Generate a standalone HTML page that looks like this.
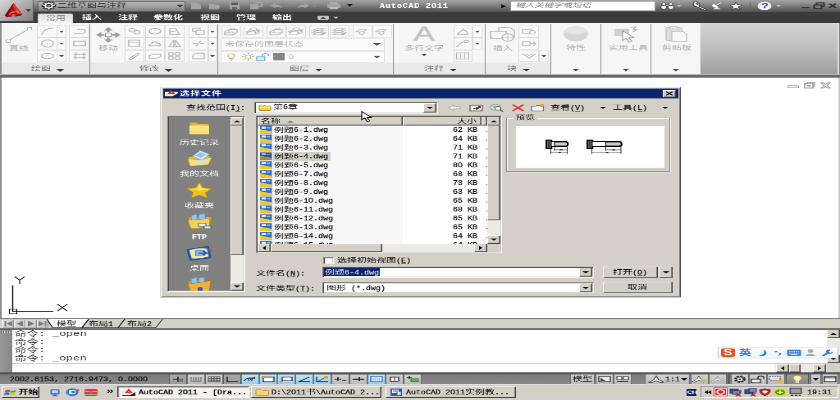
<!DOCTYPE html>
<html lang="zh-CN"><head><meta charset="utf-8"><title>AutoCAD 2011 - 选择文件</title>
<style>
html,body{margin:0;padding:0;background:#fff;}
body{width:840px;height:400px;overflow:hidden;position:relative;font-family:"Liberation Sans",sans-serif;}
#scr{position:absolute;left:0;top:0;width:1024px;height:768px;transform-origin:0 0;transform:scale(0.8203125,0.5208333);background:#fff;overflow:hidden;will-change:transform;}
#scr div,#scr svg,#scr span{position:absolute;box-sizing:border-box;}
#scr svg{overflow:visible;}
.lt{font-family:"Liberation Mono",monospace;white-space:pre;transform-origin:0 0;-webkit-text-stroke:.28px currentColor;}
.z{font-family:"Liberation Sans",sans-serif;}
.sans{font-family:"Liberation Sans",sans-serif;}
.cj{font-family:"Liberation Sans","Noto Sans CJK SC",sans-serif;white-space:nowrap;line-height:1;font-size:12px;}
.face{background:#d4d0c8;}
.raised{background:#d4d0c8;border:1px solid;border-color:#fff #404040 #404040 #fff;box-shadow:inset -1px -1px #808080,inset 1px 1px #d4d0c8;}
.raised2{background:#d4d0c8;border:1px solid;border-color:#d4d0c8 #404040 #404040 #d4d0c8;box-shadow:inset -1px -1px #808080,inset 1px 1px #fff;}
.sunken{background:#fff;border:1px solid;border-color:#808080 #fff #fff #808080;box-shadow:inset 1px 1px #404040,inset -1px -1px #d4d0c8;}
.thin-sunken{border:1px solid;border-color:#808080 #fff #fff #808080;}
.thin-raised{border:1px solid;border-color:#fff #808080 #808080 #fff;}
</style></head><body>
<div id="scr">
<div class="" style="left:0px;top:0px;width:1024px;height:23.5px;background:linear-gradient(#a2a2a2,#8c8c8c 30%,#666 70%,#4e4e4e);"></div>
<div class="" style="left:0px;top:23px;width:1024px;height:22px;background:#3b3b3b;"></div>
<div class="" style="left:0px;top:0px;width:41px;height:41px;background:linear-gradient(135deg,#d8d8d8,#a8a8a8 55%,#7c7c7c);border-right:1px solid #5a5a5a;border-bottom:1px solid #555;"></div>
<svg style="left:5px;top:4px;" width="23" height="31" viewBox="0 0 26 33"><path d="M13 1L25 25L22 29L4 32L1 28Z" fill="#c41212"/><path d="M13 1L1 28L4 32L9 22Z" fill="#7a0909"/><path d="M13 1L25 25L21 26L13 10Z" fill="#ea362c"/><path d="M8 21L19 17L21 23L6 27Z" fill="#f25a48"/><path d="M4 32L22 29L25 25L14 28Z" fill="#650707"/><path d="M10 23L17 21L18 24L9 26Z" fill="#a30e0e"/><path d="M9 31.300L13 25L17 30Z" fill="#8a8a8a"/></svg>
<svg style="left:31px;top:18px;" width="7" height="5" viewBox="0 0 7 5"><path d="M0 0H7L3.5 4.5Z" fill="#333"/></svg>
<div class="" style="left:46px;top:1.5px;width:180px;height:20px;background:linear-gradient(#b6b6b6,#a2a2a2 45%,#808080);border:1px solid #5e5e5e;border-top-color:#4a4a4a;border-radius:2px;"></div>
<svg style="left:50px;top:2px;" width="19" height="18" viewBox="0 0 19 18"><path d="M17.6 7.7L17.6 10.3L15.4 10.4L14.7 12.2L16.1 13.8L14.3 15.6L12.7 14.2L10.9 14.9L10.8 17.1L8.2 17.1L8.1 14.9L6.3 14.2L4.7 15.6L2.9 13.8L4.3 12.2L3.6 10.4L1.4 10.3L1.4 7.7L3.6 7.6L4.3 5.8L2.9 4.2L4.7 2.4L6.3 3.8L8.1 3.1L8.2 0.9L10.8 0.9L10.9 3.1L12.7 3.8L14.3 2.4L16.1 4.2L14.7 5.8L15.4 7.6Z" fill="#f4f4f4" stroke="#222" stroke-width="1.300"/><circle cx="9.500" cy="9" r="2.600" fill="#8e8e8e" stroke="#222" stroke-width="1.100"/></svg>
<span class="cj" style="left:70px;top:5px;color:#2e2e2e;">二维草图与注释</span>
<svg style="left:215px;top:9px;" width="9" height="5" viewBox="0 0 9 5"><path d="M0 0H9L4.5 5Z" fill="#333"/></svg>
<svg style="left:232px;top:4px;" width="14" height="15" viewBox="0 0 14 15"><path d="M1 1H9L13 5V14H1Z" fill="#a4a4a4"/></svg>
<svg style="left:254px;top:4px;" width="16" height="15" viewBox="0 0 16 15"><path d="M1 14V3H6L8 5H13V7H15L12 14Z" fill="#a4a4a4"/></svg>
<svg style="left:279px;top:4px;" width="14" height="15" viewBox="0 0 14 15"><path d="M1 1H13V14H1Z" fill="#a4a4a4"/><rect x="3" y="1" width="8" height="5" fill="#5a5a5a"/><rect x="4" y="9" width="6" height="5" fill="#666"/></svg>
<svg style="left:304px;top:4px;" width="16" height="15" viewBox="0 0 16 15"><path d="M1 3H11V14H1Z" fill="#a4a4a4"/><path d="M7 1H15V9H11" fill="none" stroke="#a4a4a4" stroke-width="2"/></svg>
<svg style="left:329px;top:5px;" width="16" height="12" viewBox="0 0 16 12"><path d="M1 6L7 1V4C12 4 15 7 15 11C13 8 11 8 7 8V11Z" fill="#a4a4a4"/></svg>
<svg style="left:348px;top:11px;" width="5" height="3" viewBox="0 0 5 3"><path d="M0 0H5L2.5 3Z" fill="#8a8a8a"/></svg>
<svg style="left:362px;top:5px;" width="16" height="12" viewBox="0 0 16 12"><path d="M15 6L9 1V4C4 4 1 7 1 11C3 8 5 8 9 8V11Z" fill="#a4a4a4"/></svg>
<svg style="left:381px;top:11px;" width="5" height="3" viewBox="0 0 5 3"><path d="M0 0H5L2.5 3Z" fill="#8a8a8a"/></svg>
<svg style="left:398px;top:3px;" width="18" height="16" viewBox="0 0 18 16"><rect x="4" y="1" width="10" height="5" fill="#aaa"/><rect x="1" y="5" width="16" height="7" rx="1" fill="#a2a2a2"/><rect x="4" y="10" width="10" height="5" fill="#bbb"/></svg>
<svg style="left:423px;top:8px;" width="7" height="5" viewBox="0 0 7 5"><path d="M0 0H7L3.5 5Z" fill="#1a1a1a"/></svg>
<span class="lt " style="left:463px;top:5.72px;font-size:12.84px;line-height:12px;color:#fff;transform:scaleX(0.7787);letter-spacing:1.284px;font-weight:bold;">AutoCAD 2</span><span class="lt z " style="left:526px;top:4.94px;font-size:12.48px;line-height:12px;color:#fff;transform:scaleX(0.8644);letter-spacing:1.157px;font-weight:bold;">0</span><span class="lt " style="left:533px;top:5.72px;font-size:12.84px;line-height:12px;color:#fff;transform:scaleX(0.7787);letter-spacing:1.284px;font-weight:bold;">11</span>
<svg style="left:611px;top:8px;" width="6" height="8" viewBox="0 0 6 8"><path d="M0 0L6 4L0 8Z" fill="#111"/></svg>
<div class="" style="left:622px;top:1.5px;width:177px;height:19.5px;background:#fff;border:1px solid #999;"></div>
<div style="left:629px;top:5px;width:100px;height:12px;transform:skewX(-14deg);"><span class="cj" style="left:0px;top:0px;font-size:11.5px;color:#808080;">键入关键字或短语</span></div>
<svg style="left:805px;top:4px;" width="17" height="15" viewBox="0 0 17 15"><g stroke="#333" stroke-width="1"><rect x="2" y="1.500" width="4.500" height="8" rx="1.500" fill="#f4f4f4"/><rect x="10.500" y="1.500" width="4.500" height="8" rx="1.500" fill="#f4f4f4"/><rect x="6.500" y="5" width="4" height="3.500" fill="#ccc"/><circle cx="4.200" cy="10" r="3.700" fill="#f4f4f4"/><circle cx="12.800" cy="10" r="3.700" fill="#f4f4f4"/></g></svg>
<svg style="left:825px;top:10px;" width="6" height="4" viewBox="0 0 6 4"><path d="M0 0H6L3 4Z" fill="#b4b4b4"/></svg>
<svg style="left:842px;top:2px;" width="22" height="19" viewBox="1 0 17 17"><path d="M2.500 4C2 1 6 .5 7.500 2L5.500 4L7 6L9 4.500C10 6 9.500 8 8 8.500L16 14C17 15 15.500 16.500 14.500 15.500L6 9.500C4 10 2.500 8 2.500 4Z" fill="#f6f6f6" stroke="#2a2a2a" stroke-width=".9"/></svg>
<svg style="left:866px;top:4px;" width="16" height="15" viewBox="0 0 16 15"><path d="M2 6C2 10 6 12 10 10L4 3Z" fill="#f0f0f0"/><path d="M6 7L13 1" stroke="#f0f0f0" stroke-width="1.5"/><path d="M3 14H13L9 10H7Z" fill="#e8e8e8"/></svg>
<svg style="left:889px;top:3px;" width="16" height="16" viewBox="0 0 16 16"><path d="M8 1L10 6.2L15.5 6.5L11.2 10L12.6 15.3L8 12.3L3.4 15.3L4.8 10L0.5 6.5L6 6.2Z" fill="#f4f4f4" stroke="#333" stroke-width="1"/></svg>
<div class="" style="left:914px;top:4px;width:1px;height:15px;background:#6a6a6a;"></div>
<svg style="left:923px;top:3px;" width="18" height="17" viewBox="0 0 18 17"><ellipse cx="9" cy="8.5" rx="8.5" ry="8" fill="#f4f4f4"/></svg>
<span class="sans" style="left:928px;top:2px;font-size:15px;line-height:17px;font-weight:bold;color:#1c3fb0;">?</span>
<svg style="left:946px;top:10px;" width="6" height="4" viewBox="0 0 6 4"><path d="M0 0H6L3 4Z" fill="#b4b4b4"/></svg>
<div class="" style="left:977px;top:13px;width:10px;height:3px;background:#333;"></div>
<svg style="left:991px;top:4px;" width="14" height="14" viewBox="0 0 14 14"><rect x="4.5" y="1.5" width="9" height="7" fill="none" stroke="#333" stroke-width="2"/><rect x="1.5" y="5.5" width="9" height="7" fill="#7a7a7a" stroke="#333" stroke-width="2"/></svg>
<svg style="left:1010px;top:6px;" width="10" height="10" viewBox="0 0 10 10"><path d="M1 1L9 9M9 1L1 9" stroke="#2a2a2a" stroke-width="2.2"/></svg>
<div class="" style="left:46px;top:26px;width:43px;height:19px;background:linear-gradient(#dedede,#f4f4f4);border-radius:3px 3px 0 0;border:1px solid #cfcfcf;border-bottom:0;"></div>
<span class="cj" style="left:56px;top:29px;color:#76808c;">常用</span>
<span class="cj" style="left:100px;top:28px;color:#fff;font-weight:bold;">插入</span>
<span class="cj" style="left:144px;top:28px;color:#fff;font-weight:bold;">注释</span>
<span class="cj" style="left:187px;top:28px;color:#fff;font-weight:bold;">参数化</span>
<span class="cj" style="left:244px;top:28px;color:#fff;font-weight:bold;">视图</span>
<span class="cj" style="left:288px;top:28px;color:#fff;font-weight:bold;">管理</span>
<span class="cj" style="left:332px;top:28px;color:#fff;font-weight:bold;">输出</span>
<div class="" style="left:387px;top:30px;width:14px;height:8px;background:#c4c4c4;border-radius:2px;"></div>
<svg style="left:390px;top:31.5px;" width="8" height="5" viewBox="0 0 8 5"><path d="M0 5H8L4 0Z" fill="#444"/></svg>
<svg style="left:406px;top:32px;" width="7" height="4" viewBox="0 0 7 4"><path d="M0 0H7L3.5 4Z" fill="#ccc"/></svg>
<div class="" style="left:0px;top:44px;width:1024px;height:101px;background:#f6f6f6;"></div>
<div class="" style="left:0px;top:44px;width:2px;height:104px;background:#8a8a8a;"></div>
<div class="" style="left:2px;top:120px;width:108px;height:22px;background:#e9e9e9;"></div>
<div class="" style="left:110px;top:120px;width:156px;height:22px;background:#e9e9e9;"></div>
<div class="" style="left:266px;top:120px;width:214px;height:22px;background:#e9e9e9;"></div>
<div class="" style="left:480px;top:120px;width:112px;height:22px;background:#e9e9e9;"></div>
<div class="" style="left:592px;top:120px;width:80px;height:22px;background:#e9e9e9;"></div>
<div class="" style="left:853px;top:44px;width:171px;height:100px;background:linear-gradient(#d2d2d2,#bdbdbd 50%,#9c9c9c);border-left:1px solid #e8e8e8;border-top:1px solid #e0e0e0;"></div>
<div class="" style="left:1021px;top:44px;width:1.5px;height:100px;background:#e0e0e0;"></div>
<div class="" style="left:1022.5px;top:44px;width:1.5px;height:100px;background:#7a7a7a;"></div>
<div class="" style="left:109px;top:46px;width:1.4px;height:96px;background:#8c8c8c;"></div>
<div class="" style="left:265px;top:46px;width:1.4px;height:96px;background:#8c8c8c;"></div>
<div class="" style="left:479px;top:46px;width:1.4px;height:96px;background:#8c8c8c;"></div>
<div class="" style="left:591px;top:46px;width:1.4px;height:96px;background:#8c8c8c;"></div>
<div class="" style="left:671px;top:46px;width:1.4px;height:96px;background:#8c8c8c;"></div>
<div class="" style="left:732px;top:46px;width:1.4px;height:96px;background:#8c8c8c;"></div>
<div class="" style="left:793px;top:46px;width:1.4px;height:96px;background:#8c8c8c;"></div>
<div class="" style="left:0px;top:142px;width:1024px;height:3px;background:#b8b8b8;"></div>
<div class="" style="left:0px;top:144px;width:1024px;height:5px;background:#666;"></div>
<svg style="left:6px;top:51px;" width="34" height="32" viewBox="0 0 34 32"><path d="M4 27L29 5" stroke="#b2b2b2" stroke-width="1.5"/><rect x="1.5" y="25.500" width="5" height="5" fill="#fff" stroke="#b2b2b2"/><rect x="27.500" y="1.500" width="5" height="5" fill="#fff" stroke="#b2b2b2"/></svg>
<span class="cj" style="left:11px;top:87px;color:#a8a8a8;">直线</span>
<div class="" style="left:45px;top:49px;width:25px;height:23px;border:1px solid #dadada;background:#f9f9f9;"></div>
<div class="" style="left:69px;top:49px;width:12px;height:23px;border:1px solid #dadada;background:#f9f9f9;"></div>
<svg style="left:72px;top:59px;" width="6" height="4" viewBox="0 0 6 4"><path d="M0 0H6 L3 4Z" fill="#555"/></svg>
<div class="" style="left:45px;top:72px;width:25px;height:23px;border:1px solid #dadada;background:#f9f9f9;"></div>
<div class="" style="left:69px;top:72px;width:12px;height:23px;border:1px solid #dadada;background:#f9f9f9;"></div>
<svg style="left:72px;top:82px;" width="6" height="4" viewBox="0 0 6 4"><path d="M0 0H6 L3 4Z" fill="#555"/></svg>
<div class="" style="left:45px;top:96px;width:25px;height:23px;border:1px solid #dadada;background:#f9f9f9;"></div>
<div class="" style="left:69px;top:96px;width:12px;height:23px;border:1px solid #dadada;background:#f9f9f9;"></div>
<svg style="left:72px;top:106px;" width="6" height="4" viewBox="0 0 6 4"><path d="M0 0H6 L3 4Z" fill="#555"/></svg>
<svg style="left:49px;top:52px;" width="18" height="17" viewBox="0 0 18 17"><path d="M2 15C3 7 9 2 16 2" fill="none" stroke="#b2b2b2" stroke-width="1.5"/></svg>
<svg style="left:49px;top:75px;" width="18" height="17" viewBox="0 0 18 17"><circle cx="9" cy="8.5" r="7" fill="none" stroke="#b2b2b2" stroke-width="1.5"/><circle cx="9" cy="8.5" r="1" fill="#b2b2b2"/></svg>
<svg style="left:49px;top:99px;" width="18" height="17" viewBox="0 0 18 17"><ellipse cx="9" cy="8.5" rx="7.5" ry="5" fill="none" stroke="#b2b2b2" stroke-width="1.5"/></svg>
<div class="" style="left:84px;top:49px;width:25px;height:23px;border:1px solid #dadada;background:#f9f9f9;"></div>
<div class="" style="left:84px;top:72px;width:25px;height:23px;border:1px solid #dadada;background:#f9f9f9;"></div>
<div class="" style="left:84px;top:96px;width:25px;height:23px;border:1px solid #dadada;background:#f9f9f9;"></div>
<svg style="left:88px;top:53px;" width="18" height="15" viewBox="0 0 18 15"><path d="M2 11H12A4 4 0 0 0 12 3H6" fill="none" stroke="#b2b2b2" stroke-width="1.6"/></svg>
<svg style="left:88px;top:76px;" width="18" height="15" viewBox="0 0 18 15"><rect x="2" y="3" width="14" height="9" fill="none" stroke="#b2b2b2" stroke-width="1.6"/></svg>
<svg style="left:88px;top:100px;" width="18" height="15" viewBox="0 0 18 15"><path d="M4 1V14M14 1V14M1 4H17M1 11H17" stroke="#b2b2b2" stroke-width="1.4"/></svg>
<span class="cj" style="left:38px;top:126px;color:#6e6e6e;">绘图</span>
<svg style="left:69px;top:133px;" width="9" height="5" viewBox="0 0 9 5"><path d="M0 0H9 L4.5 5Z" fill="#333"/></svg>
<svg style="left:117px;top:52px;" width="30" height="30" viewBox="0 0 30 30"><rect x="11.500" y="11.500" width="7" height="7" fill="#fff" stroke="#8e8e8e" stroke-width="1.200"/><path d="M15 0L9.500 6.500H20.500ZM15 30L9.500 23.500H20.500ZM0 15L6.500 9.500V20.500ZM30 15L23.500 9.500V20.500Z" fill="#9c9c9c"/><path d="M15 6V10.500M15 19.500V24M6 15H10.500M19.500 15H24" stroke="#9c9c9c" stroke-width="3"/></svg>
<span class="cj" style="left:120px;top:87px;color:#a8a8a8;">移动</span>
<div class="" style="left:152px;top:49px;width:24px;height:23px;border:1px solid #dadada;background:#f9f9f9;"></div>
<div class="" style="left:176.5px;top:49px;width:24px;height:23px;border:1px solid #dadada;background:#f9f9f9;"></div>
<div class="" style="left:201px;top:49px;width:24px;height:23px;border:1px solid #dadada;background:#f9f9f9;"></div>
<div class="" style="left:230px;top:49px;width:24px;height:23px;border:1px solid #dadada;background:#f9f9f9;"></div>
<div class="" style="left:254px;top:49px;width:11px;height:23px;border:1px solid #dadada;background:#f9f9f9;"></div>
<svg style="left:256px;top:59px;" width="6" height="4" viewBox="0 0 6 4"><path d="M0 0H6 L3 4Z" fill="#555"/></svg>
<div class="" style="left:152px;top:72px;width:24px;height:23px;border:1px solid #dadada;background:#f9f9f9;"></div>
<div class="" style="left:176.5px;top:72px;width:24px;height:23px;border:1px solid #dadada;background:#f9f9f9;"></div>
<div class="" style="left:201px;top:72px;width:24px;height:23px;border:1px solid #dadada;background:#f9f9f9;"></div>
<div class="" style="left:230px;top:72px;width:24px;height:23px;border:1px solid #dadada;background:#f9f9f9;"></div>
<div class="" style="left:254px;top:72px;width:11px;height:23px;border:1px solid #dadada;background:#f9f9f9;"></div>
<svg style="left:256px;top:82px;" width="6" height="4" viewBox="0 0 6 4"><path d="M0 0H6 L3 4Z" fill="#555"/></svg>
<div class="" style="left:152px;top:96px;width:24px;height:23px;border:1px solid #dadada;background:#f9f9f9;"></div>
<div class="" style="left:176.5px;top:96px;width:24px;height:23px;border:1px solid #dadada;background:#f9f9f9;"></div>
<div class="" style="left:201px;top:96px;width:24px;height:23px;border:1px solid #dadada;background:#f9f9f9;"></div>
<div class="" style="left:230px;top:96px;width:24px;height:23px;border:1px solid #dadada;background:#f9f9f9;"></div>
<div class="" style="left:254px;top:96px;width:11px;height:23px;border:1px solid #dadada;background:#f9f9f9;"></div>
<svg style="left:256px;top:106px;" width="6" height="4" viewBox="0 0 6 4"><path d="M0 0H6 L3 4Z" fill="#555"/></svg>
<svg style="left:155px;top:52px;" width="18" height="17" viewBox="0 0 18 17"><circle cx="6" cy="6" r="3.5" fill="none" stroke="#b2b2b2" stroke-width="1.4"/><circle cx="12" cy="10" r="3.5" fill="none" stroke="#b2b2b2" stroke-width="1.4"/></svg>
<svg style="left:179.5px;top:52px;" width="18" height="17" viewBox="0 0 18 17"><ellipse cx="9" cy="8" rx="7" ry="5.5" fill="none" stroke="#b2b2b2" stroke-width="1.5"/></svg>
<svg style="left:204px;top:52px;" width="18" height="17" viewBox="0 0 18 17"><path d="M3 14H15L10 3H3ZM4 9H10" fill="none" stroke="#b2b2b2" stroke-width="1.4"/></svg>
<svg style="left:155px;top:75px;" width="18" height="17" viewBox="0 0 18 17"><rect x="2" y="2" width="13" height="12" fill="none" stroke="#b2b2b2" stroke-width="1.4"/><path d="M2 6H15" stroke="#b2b2b2"/></svg>
<svg style="left:179.5px;top:75px;" width="18" height="17" viewBox="0 0 18 17"><path d="M2 13C2 9 5 9 5 9C5 5 11 4 12 8C16 8 16 13 14 13Z" fill="none" stroke="#b2b2b2" stroke-width="1.4"/></svg>
<svg style="left:204px;top:75px;" width="18" height="17" viewBox="0 0 18 17"><path d="M8 2V14H2ZM10 2V14H16Z" fill="none" stroke="#b2b2b2" stroke-width="1.3"/></svg>
<svg style="left:155px;top:99px;" width="18" height="17" viewBox="0 0 18 17"><path d="M2 14L13 3L15 5L4 16Z" fill="none" stroke="#b2b2b2" stroke-width="1.3"/></svg>
<svg style="left:179.5px;top:99px;" width="18" height="17" viewBox="0 0 18 17"><path d="M2 8L8 5H16V10L10 13H2Z" fill="none" stroke="#b2b2b2" stroke-width="1.3"/></svg>
<svg style="left:204px;top:99px;" width="18" height="17" viewBox="0 0 18 17"><path d="M2 2H7V7H2ZM10 2H15V7H10ZM2 10H7V15H2ZM10 10H15V15H10Z" fill="none" stroke="#b2b2b2" stroke-width="1.3"/></svg>
<svg style="left:233px;top:52px;" width="18" height="17" viewBox="0 0 18 17"><rect x="2" y="2" width="9" height="7" fill="none" stroke="#b2b2b2" stroke-width="1.4"/><rect x="6" y="6" width="10" height="8" fill="#fafafa" stroke="#b2b2b2" stroke-width="1.4"/></svg>
<svg style="left:233px;top:75px;" width="18" height="17" viewBox="0 0 18 17"><path d="M2 9H7M11 9H16M6 14L12 3" stroke="#b2b2b2" stroke-width="1.4"/></svg>
<svg style="left:233px;top:99px;" width="18" height="17" viewBox="0 0 18 17"><path d="M2 14V9C2 5 6 3 9 3H16V14Z" fill="none" stroke="#b2b2b2" stroke-width="1.4"/></svg>
<span class="cj" style="left:170px;top:126px;color:#6e6e6e;">修改</span>
<svg style="left:201px;top:133px;" width="9" height="5" viewBox="0 0 9 5"><path d="M0 0H9 L4.5 5Z" fill="#333"/></svg>
<div class="" style="left:270px;top:49px;width:23.5px;height:23px;border:1px solid #dadada;background:#f9f9f9;"></div>
<svg style="left:272px;top:52px;" width="20" height="17" viewBox="0 0 20 17"><path d="M2 9L7 5H17V11L12 15H2Z" fill="none" stroke="#b2b2b2" stroke-width="1.3"/><path d="M7 5V11H2M7 11H17" fill="none" stroke="#b2b2b2" stroke-width="1"/><path d="M9 5V2H14V5" fill="none" stroke="#b2b2b2" stroke-width="1.1"/></svg>
<div class="" style="left:297px;top:49px;width:23.5px;height:23px;border:1px solid #dadada;background:#f9f9f9;"></div>
<svg style="left:299px;top:52px;" width="20" height="17" viewBox="0 0 20 17"><path d="M2 8L7 5H17L12 8ZM2 11L7 8M12 8V11L17 8V5M2 8V14H12L17 11V8M12 11V14" fill="none" stroke="#b2b2b2" stroke-width="1.2"/><ellipse cx="10" cy="4" rx="4" ry="2.5" fill="#f9f9f9" stroke="#b2b2b2" stroke-width="1.1"/></svg>
<div class="" style="left:325px;top:49px;width:23.5px;height:23px;border:1px solid #dadada;background:#f9f9f9;"></div>
<svg style="left:327px;top:52px;" width="20" height="17" viewBox="0 0 20 17"><path d="M2 9L7 5H17V11L12 15H2Z" fill="none" stroke="#b2b2b2" stroke-width="1.3"/><path d="M7 5V11H2M7 11H17" fill="none" stroke="#b2b2b2" stroke-width="1"/><path d="M9 5V2H14V5" fill="none" stroke="#b2b2b2" stroke-width="1.1"/></svg>
<div class="" style="left:349px;top:49px;width:23.5px;height:23px;border:1px solid #dadada;background:#f9f9f9;"></div>
<svg style="left:351px;top:52px;" width="20" height="17" viewBox="0 0 20 17"><path d="M2 8L7 5H17L12 8ZM2 11L7 8M12 8V11L17 8V5M2 8V14H12L17 11V8M12 11V14" fill="none" stroke="#b2b2b2" stroke-width="1.2"/><ellipse cx="10" cy="4" rx="4" ry="2.5" fill="#f9f9f9" stroke="#b2b2b2" stroke-width="1.1"/></svg>
<div class="" style="left:377px;top:49px;width:23.5px;height:23px;border:1px solid #dadada;background:#f9f9f9;"></div>
<svg style="left:379px;top:52px;" width="20" height="17" viewBox="0 0 20 17"><path d="M2 6L7 3H16L11 6ZM2 10L7 7H16L11 10ZM2 14L7 11H16L11 14Z" fill="none" stroke="#b2b2b2" stroke-width="1.2"/><path d="M12 13L14 15L18 10" fill="none" stroke="#999" stroke-width="1.3"/></svg>
<div class="" style="left:402px;top:49px;width:23.5px;height:23px;border:1px solid #dadada;background:#f9f9f9;"></div>
<svg style="left:404px;top:52px;" width="20" height="17" viewBox="0 0 20 17"><path d="M2 6L7 3H16L11 6ZM2 10L7 7H16L11 10ZM2 14L7 11H16L11 14Z" fill="none" stroke="#b2b2b2" stroke-width="1.2"/><path d="M12 13L14 15L18 10" fill="none" stroke="#999" stroke-width="1.3"/></svg>
<div class="" style="left:430px;top:49px;width:23.5px;height:23px;border:1px solid #dadada;background:#f9f9f9;"></div>
<svg style="left:432px;top:52px;" width="20" height="17" viewBox="0 0 20 17"><path d="M2 9L6 5H15L11 9ZM6 9V12L9 15L12 12V9" fill="none" stroke="#b2b2b2" stroke-width="1.2"/></svg>
<div class="" style="left:454px;top:49px;width:23.5px;height:23px;border:1px solid #dadada;background:#f9f9f9;"></div>
<svg style="left:456px;top:52px;" width="20" height="17" viewBox="0 0 20 17"><path d="M2 9L6 5H15L11 9ZM6 9V12L9 15L12 12V9" fill="none" stroke="#b2b2b2" stroke-width="1.2"/></svg>
<div class="" style="left:269px;top:74px;width:200px;height:22.5px;border:1px solid #d8d8d8;background:#fbfbfb;"></div>
<span class="cj" style="left:274px;top:79px;color:#aeaeae;">未保存的图层状态</span>
<svg style="left:455px;top:83px;" width="9" height="5" viewBox="0 0 9 5"><path d="M0 0H9 L4.5 5Z" fill="#555"/></svg>
<div class="" style="left:269px;top:98px;width:200px;height:22.5px;border:1px solid #d8d8d8;background:#fbfbfb;"></div>
<svg style="left:277px;top:101px;" width="10" height="17" viewBox="0 0 12 17"><path d="M6 1C2.800 1 1 3.500 1 6C1 8.500 3.500 9.500 3.500 12H8.500C8.500 9.500 11 8.500 11 6C11 3.500 9.200 1 6 1Z" fill="#fffce6" stroke="#b0a580" stroke-width="1.200"/><path d="M4 14H8M4.500 16H7.500" stroke="#999" stroke-width="1.200"/></svg>
<svg style="left:294px;top:100px;" width="17" height="18" viewBox="0 0 18 18"><circle cx="9" cy="9" r="3.600" fill="#fffbd0" stroke="#b8a868"/><path d="M9 1V4M9 14V17M1 9H4M14 9H17M3.300 3.300L5.500 5.500M12.500 12.500L14.700 14.700M3.300 14.700L5.500 12.500M12.500 5.500L14.700 3.300" stroke="#777" stroke-width="1"/></svg>
<svg style="left:312px;top:101px;" width="18" height="16" viewBox="0 0 20 18"><rect x="1" y="9" width="11" height="8" fill="#d8eef8" stroke="#5aa0cc" stroke-width="1.300"/><path d="M9 9V5.500C9 1.500 17 1.500 17 5.500V7" fill="none" stroke="#5aa0cc" stroke-width="1.400"/></svg>
<div class="" style="left:333px;top:102px;width:14px;height:14px;background:#858585;"></div>
<span class="lt z " style="left:352px;top:102.94px;font-size:12.48px;line-height:12px;color:#c4c4c4;transform:scaleX(0.8644);">0</span>
<svg style="left:455px;top:107px;" width="9" height="5" viewBox="0 0 9 5"><path d="M0 0H9 L4.5 5Z" fill="#555"/></svg>
<span class="cj" style="left:353px;top:126px;color:#6e6e6e;">图层</span>
<svg style="left:384px;top:132px;" width="9" height="5" viewBox="0 0 9 5"><path d="M0 0H9 L4.5 5Z" fill="#333"/></svg>
<span class="sans" style="left:504px;top:46px;font-size:39px;line-height:38px;color:#c2c2c2;-webkit-text-stroke:.8px #c2c2c2;">A</span>
<span class="cj" style="left:493px;top:87px;color:#a8a8a8;">多行文字</span>
<svg style="left:514px;top:104px;" width="6" height="4" viewBox="0 0 6 4"><path d="M0 0H6 L3 4Z" fill="#555"/></svg>
<div class="" style="left:553px;top:49px;width:22.5px;height:23px;border:1px solid #dadada;background:#f9f9f9;"></div>
<div class="" style="left:575.5px;top:49px;width:12px;height:23px;border:1px solid #dadada;background:#f9f9f9;"></div>
<svg style="left:578.5px;top:59px;" width="6" height="4" viewBox="0 0 6 4"><path d="M0 0H6 L3 4Z" fill="#555"/></svg>
<div class="" style="left:553px;top:72px;width:22.5px;height:23px;border:1px solid #dadada;background:#f9f9f9;"></div>
<div class="" style="left:575.5px;top:72px;width:12px;height:23px;border:1px solid #dadada;background:#f9f9f9;"></div>
<svg style="left:578.5px;top:82px;" width="6" height="4" viewBox="0 0 6 4"><path d="M0 0H6 L3 4Z" fill="#555"/></svg>
<div class="" style="left:553px;top:96px;width:22.5px;height:23px;border:1px solid #dadada;background:#f9f9f9;"></div>
<svg style="left:555px;top:52px;" width="18" height="17" viewBox="0 0 18 17"><path d="M2 14H16M2 14L11 3M9 5C13 6 15 10 15 14" fill="none" stroke="#b2b2b2" stroke-width="1.4"/></svg>
<svg style="left:555px;top:75px;" width="18" height="17" viewBox="0 0 18 17"><path d="M2 15C5 10 6 6 11 5" fill="none" stroke="#b2b2b2" stroke-width="1.4"/><circle cx="13.500" cy="4.500" r="2.500" fill="none" stroke="#b2b2b2" stroke-width="1.2"/></svg>
<svg style="left:555px;top:99px;" width="18" height="17" viewBox="0 0 18 17"><rect x="1.500" y="2.500" width="15" height="12" fill="none" stroke="#b2b2b2" stroke-width="1.3"/><path d="M1 6.500H17M1 10.500H17M6.500 2V15M11.500 2V15" stroke="#b2b2b2" stroke-width="1.100"/></svg>
<span class="cj" style="left:517px;top:126px;color:#6e6e6e;">注释</span>
<svg style="left:548px;top:132px;" width="9" height="5" viewBox="0 0 9 5"><path d="M0 0H9 L4.5 5Z" fill="#333"/></svg>
<svg style="left:597px;top:51px;" width="32" height="30" viewBox="0 0 32 30"><rect x="1" y="9" width="19" height="14" fill="#f9f9f9" stroke="#b2b2b2" stroke-width="1.400"/><path d="M11 9V2H25L30 7V21H20" fill="none" stroke="#b2b2b2" stroke-width="1.400"/><circle cx="22" cy="21" r="7" fill="#f9f9f9" stroke="#b2b2b2" stroke-width="1.400"/><path d="M1 21H4M22 14V28M15 21H29" stroke="#b2b2b2" stroke-width=".9"/></svg>
<span class="cj" style="left:601px;top:87px;color:#a8a8a8;">插入</span>
<div class="" style="left:632px;top:49px;width:25px;height:23px;border:1px solid #dadada;background:#f9f9f9;"></div>
<div class="" style="left:632px;top:72px;width:25px;height:23px;border:1px solid #dadada;background:#f9f9f9;"></div>
<div class="" style="left:632px;top:96px;width:25px;height:23px;border:1px solid #dadada;background:#f9f9f9;"></div>
<div class="" style="left:657px;top:96px;width:11.5px;height:23px;border:1px solid #dadada;background:#f9f9f9;"></div>
<svg style="left:660px;top:106px;" width="6" height="4" viewBox="0 0 6 4"><path d="M0 0H6 L3 4Z" fill="#555"/></svg>
<svg style="left:635px;top:52px;" width="20" height="17" viewBox="0 0 20 17"><rect x="2" y="4" width="11" height="8" fill="none" stroke="#b2b2b2" stroke-width="1.300"/><circle cx="14" cy="10" r="3.500" fill="#fafafa" stroke="#b2b2b2" stroke-width="1.200"/></svg>
<svg style="left:635px;top:75px;" width="20" height="17" viewBox="0 0 20 17"><rect x="2" y="5" width="9" height="8" fill="none" stroke="#b2b2b2" stroke-width="1.300"/><path d="M11 9H18M15 5L18 9L15 13" fill="none" stroke="#b2b2b2" stroke-width="1.300"/></svg>
<svg style="left:635px;top:99px;" width="20" height="17" viewBox="0 0 20 17"><path d="M2 4L10 13L18 4M6 4C8 8 12 8 14 4" fill="none" stroke="#b2b2b2" stroke-width="1.400"/></svg>
<span class="cj" style="left:618px;top:126px;color:#6e6e6e;">块</span>
<svg style="left:637px;top:132px;" width="9" height="5" viewBox="0 0 9 5"><path d="M0 0H9 L4.5 5Z" fill="#333"/></svg>
<svg style="left:687px;top:50px;" width="30" height="30" viewBox="0 0 30 30"><ellipse cx="15" cy="15" rx="15" ry="14.500" fill="#d6d6d6"/><path d="M1.500 11C6 17 24 17 28.500 11C24 -2 6 -2 1.500 11Z" fill="#e6e6e6"/></svg>
<span class="cj" style="left:690px;top:86px;color:#a8a8a8;">特性</span>
<svg style="left:698px;top:132px;" width="8" height="5" viewBox="0 0 8 5"><path d="M0 0H8 L4 5Z" fill="#444"/></svg>
<svg style="left:746px;top:50px;" width="32" height="32" viewBox="0 0 32 32"><rect x="3" y="5" width="18" height="14" fill="#cfcfcf"/><path d="M13 9L13 28L17.500 23.500L21 31L24 29.500L20.500 22.500H27Z" fill="#fff" stroke="#9a9a9a" stroke-width="1.300"/><path d="M23 3L29 1L26 7L31 6L25 12" fill="none" stroke="#b2b2b2" stroke-width="1.300"/></svg>
<span class="cj" style="left:742px;top:86px;color:#a8a8a8;">实用工具</span>
<svg style="left:759px;top:132px;" width="8" height="5" viewBox="0 0 8 5"><path d="M0 0H8 L4 5Z" fill="#444"/></svg>
<svg style="left:810px;top:49px;" width="30" height="33" viewBox="0 0 30 33"><rect x="2" y="4" width="19" height="25" rx="2" fill="#dedede" stroke="#bcbcbc" stroke-width="1.300"/><rect x="7" y="1.500" width="9" height="5" rx="1" fill="#e8e8e8" stroke="#bcbcbc"/><path d="M9 11H22L27 16V31H9Z" fill="#f8f8f8" stroke="#bcbcbc" stroke-width="1.300"/></svg>
<span class="cj" style="left:807px;top:86px;color:#a8a8a8;">剪贴板</span>
<svg style="left:820px;top:132px;" width="8" height="5" viewBox="0 0 8 5"><path d="M0 0H8 L4 5Z" fill="#444"/></svg>
<div class="" style="left:0px;top:149px;width:1024px;height:463px;background:#fff;border-left:2px solid #8a8a8a;border-right:2px solid #c8c8c8;"></div>
<div class="" style="left:960px;top:164px;width:14px;height:5px;border:1.5px solid #9a9a9a;background:#eee;"></div>
<svg style="left:980px;top:157px;" width="14" height="14" viewBox="0 0 14 14"><path d="M3 3L5 1H13V9L11 11" fill="none" stroke="#9a9a9a" stroke-width="1.4"/><rect x="1" y="3" width="10" height="9" fill="#eee" stroke="#9a9a9a" stroke-width="1.6"/><rect x="4" y="6" width="4" height="3" fill="#9a9a9a"/></svg>
<svg style="left:1000px;top:158px;" width="13" height="12" viewBox="0 0 13 12"><path d="M1 1H4L6.5 4L9 1H12L8.5 6L12 11H9L6.5 8L4 11H1L4.5 6Z" fill="#eee" stroke="#9a9a9a" stroke-width="1.3"/></svg>
<svg style="left:8px;top:528px;" width="80" height="78" viewBox="0 0 80 78"><path d="M7.5 20V70H57" fill="none" stroke="#000" stroke-width="1.4"/><rect x="3.5" y="65.5" width="9" height="9" fill="none" stroke="#000" stroke-width="1.2"/><path d="M10 3L16 10L22 3M16 10V17" fill="none" stroke="#000" stroke-width="1.2"/><path d="M62 56L74 69M74 56L62 69" stroke="#000" stroke-width="1.2"/></svg>
<div class="" style="left:195px;top:167px;width:635px;height:404px;background:#d4d0c8;border:1px solid;border-color:#d4d0c8 #404040 #404040 #d4d0c8;box-shadow:inset 1px 1px #fff,inset -1px -1px #808080;"></div>
<div class="" style="left:199px;top:170px;width:628px;height:19px;background:#0a246a;"></div>
<svg style="left:201px;top:171px;" width="16" height="16" viewBox="0 0 16 16"><rect x="0" y="5" width="16" height="10" fill="#e8e8e8"/><path d="M0 15H16V8L9 14H0Z" fill="#222"/><path d="M8 1L13 10H10.5L8 5.5L5.5 10H3Z" fill="#e02020"/><path d="M4.5 8.5H11.5" stroke="#e02020" stroke-width="1.3"/></svg>
<span class="cj" style="left:219px;top:174px;color:#fff;font-weight:bold;letter-spacing:1px;">选择文件</span>
<div class="raised" style="left:808px;top:173px;width:16px;height:14px;"></div>
<svg style="left:812px;top:176px;" width="8" height="7" viewBox="0 0 8 7"><path d="M0 0L8 7M8 0L0 7" stroke="#000" stroke-width="1.7"/></svg>
<span class="cj" style="left:227px;top:201px;color:#000;">查找范围</span><span class="lt " style="left:275px;top:201.72px;font-size:12.84px;line-height:12px;color:#000;transform:scaleX(0.7787);">(I):</span>
<div class="" style="left:287px;top:213px;width:6px;height:1px;background:#000;"></div>
<div class="sunken" style="left:310px;top:196px;width:224px;height:22px;"></div>
<svg style="left:315px;top:200px;" width="16" height="14" viewBox="0 0 17.500 15"><path d="M1 3.500C1 2 2 1.500 3 1.500H7L9 3.500H15C16 3.500 16.500 4 16.500 5V12C16.500 13 16 13.500 15 13.500H2.500C1.500 13.500 1 13 1 12Z" fill="#f3cf52" stroke="#a8801e" stroke-width="1.100"/><path d="M1.500 6.500H16" stroke="#fff2b0" stroke-width="1.600"/><path d="M2 12.300H16" stroke="#d9a520" stroke-width="1.400"/></svg>
<span class="cj" style="left:333px;top:199.5px;color:#000;">第</span><span class="lt " style="left:345px;top:200.22px;font-size:12.84px;line-height:12px;color:#000;transform:scaleX(0.7787);">6</span><span class="cj" style="left:351px;top:199.5px;color:#000;">章</span>
<div class="raised" style="left:516px;top:198px;width:16px;height:18px;"></div>
<svg style="left:520px;top:205px;" width="8" height="4" viewBox="0 0 8 4"><path d="M0 0H8L4 4Z" fill="#000"/></svg>
<svg style="left:546px;top:200px;" width="16" height="14" viewBox="0 0 16 14"><path d="M1 7L7 1.5V5H15V9H7V12.5Z" fill="#f4f4f4" stroke="#a8a8a8" stroke-width="1.2"/></svg>
<svg style="left:572px;top:200px;" width="17" height="14" viewBox="0 0 17 14"><rect x="1" y="2" width="15" height="11" fill="#f2f2f2" stroke="#555" stroke-width="1.3"/><path d="M5 8H10M8.5 5.5L11 8L8.5 10.5" fill="none" stroke="#222" stroke-width="1.6"/><rect x="11" y="4" width="3" height="3" fill="#333"/></svg>
<svg style="left:597px;top:199px;" width="17" height="16" viewBox="0 0 17 16"><circle cx="7" cy="7" r="6" fill="#cfe6ee" stroke="#7aa0ae" stroke-width="1.2"/><path d="M3 5C5 3 8 3 10 5C9 8 6 9 4 8Z" fill="#9fc7a8"/><circle cx="10" cy="9" r="3.6" fill="#f4f4f4" stroke="#666" stroke-width="1.3"/><path d="M12.5 11.5L16 15" stroke="#555" stroke-width="2"/></svg>
<svg style="left:624px;top:200px;" width="15" height="14" viewBox="0 0 15 14"><path d="M1.5 1.5L13.5 12.5M13.5 1.5L1.5 12.5" stroke="#e23a3a" stroke-width="2.4" stroke-linecap="round"/></svg>
<svg style="left:647px;top:199px;" width="17" height="15" viewBox="0 0 17 15"><path d="M1 5H6L7.5 3.500H12V5H15.500V14H1Z" fill="#f6f6f6" stroke="#5a6a88" stroke-width="1.2"/><circle cx="13.500" cy="3" r="2.600" fill="#f59a23"/></svg>
<span class="cj" style="left:671px;top:201px;color:#000;">查看</span><span class="lt " style="left:695px;top:201.72px;font-size:12.84px;line-height:12px;color:#000;transform:scaleX(0.7787);">(V)</span>
<div class="" style="left:701px;top:213px;width:6px;height:1px;background:#000;"></div>
<svg style="left:731px;top:205px;" width="8" height="4" viewBox="0 0 8 4"><path d="M0 0H8L4 4Z" fill="#000"/></svg>
<span class="cj" style="left:747px;top:201px;color:#000;">工具</span><span class="lt " style="left:771px;top:201.72px;font-size:12.84px;line-height:12px;color:#000;transform:scaleX(0.7787);">(L)</span>
<div class="" style="left:777px;top:213px;width:6px;height:1px;background:#000;"></div>
<svg style="left:807px;top:205px;" width="8" height="4" viewBox="0 0 8 4"><path d="M0 0H8L4 4Z" fill="#000"/></svg>
<div class="sunken" style="left:204px;top:223px;width:95px;height:337px;background:#808080;"></div>
<div class="" style="left:206px;top:225px;width:75px;height:333px;background:#808080;"></div>
<div class="" style="left:281px;top:225px;width:16px;height:333px;background:#eceae4;"></div>
<div class="raised" style="left:281px;top:225px;width:16px;height:16px;"></div>
<svg style="left:285px;top:231px;" width="8" height="4" viewBox="0 0 8 4"><path d="M0 4H8L4 0Z" fill="#000"/></svg>
<div class="raised" style="left:281px;top:241px;width:16px;height:249px;"></div>
<div class="raised" style="left:281px;top:542px;width:16px;height:16px;"></div>
<svg style="left:285px;top:548px;" width="8" height="4" viewBox="0 0 8 4"><path d="M0 0H8L4 4Z" fill="#000"/></svg>
<div style="left:0;top:0;width:281px;height:558px;overflow:hidden;"><svg style="left:227px;top:228px;" width="32" height="32" viewBox="0 0 32 32"><path d="M4 9C4 7.5 5 7 6 7H12L14.5 9.5H26C27.5 9.5 28 10 28 11.5V28C28 29.5 27.5 30 26 30H6C4.5 30 4 29.5 4 28Z" fill="#e2b43a" stroke="#a8801e" stroke-width=".8"/><path d="M4 13.5C12 12.5 20 12.5 28 13.5V28C28 29.5 27.5 30 26 30H6C4.5 30 4 29.5 4 28Z" fill="#f9e07a"/><path d="M5 14.5C12 13.5 20 13.5 27 14.5" stroke="#fff4c0" stroke-width="1.6" fill="none"/></svg><span class="cj" style="left:219px;top:268px;color:#fff;">历史记录</span><svg style="left:227px;top:288.3px;" width="32" height="32" viewBox="0 0 32 32"><path d="M2 14L10 11L14 13L29 11V17L27 28L5 31Z" fill="#e4b53a" stroke="#a8801e" stroke-width=".8"/><path d="M8 12L17 1L28 8L19 19Z" fill="#d4ebfc" stroke="#7db0dc" stroke-width=".9"/><path d="M11 11L17 4L24 8.5L18 15Z" fill="#8cc3f0"/><path d="M2 17L17 19L31 14L27 28L5 31Z" fill="#f9e07a" stroke="#c29a2a" stroke-width=".8"/><path d="M13 20L24 17L22 25L12 26Z" fill="#bfe2f8" opacity=".85"/></svg><span class="cj" style="left:219px;top:328.3px;color:#fff;">我的文档</span><svg style="left:227px;top:348.6px;" width="32" height="32" viewBox="0 0 32 32"><path d="M16 1L20.5 11.5L31.5 13L23.5 20.5L26 31L16 25.5L6 31L8.5 20.5L0.5 13L11.5 11.5Z" fill="#f2c21e" stroke="#b8880f" stroke-width=".9"/><path d="M16 4L19 13L28 14L16 17Z" fill="#ffe98a"/><path d="M16 4L13 13L4 14L16 17Z" fill="#fbd64a"/></svg><span class="cj" style="left:225px;top:388.6px;color:#fff;">收藏夹</span><svg style="left:227px;top:408.9px;" width="32" height="32" viewBox="0 0 32 32"><path d="M2 9L10 6L31 8L28 29L6 30Z" fill="#dfae34" stroke="#9c761a" stroke-width=".8"/><path d="M6 5L13 2L14 22L7 24ZM15 3L23 1L24 20L16 22Z" fill="#8fc4ee" stroke="#4e86c4" stroke-width=".8"/><path d="M2 14L29 11L28 29L6 30Z" fill="#f3cf5c" stroke="#b38a22" stroke-width=".8"/><rect x="15" y="20" width="9" height="6" fill="#e4ecf8" stroke="#345" stroke-width=".8"/><rect x="22" y="25" width="8" height="5" fill="#e4ecf8" stroke="#345" stroke-width=".8"/><path d="M16 27H22" stroke="#345"/></svg><span class="lt " style="left:234px;top:449.62px;font-size:12.84px;line-height:12px;color:#fff;transform:scaleX(0.7787);font-weight:bold;">FTP</span><svg style="left:225px;top:470.2px;" width="36" height="31" viewBox="0 0 33 32"><path d="M1 9L28 3L31 26L5 31Z" fill="#1c62d2" stroke="#0c3a90" stroke-width=".9"/><path d="M4 11C10 7 21 6 26 8L28 23C20 27 10 28 7 27Z" fill="#f4e6a0"/><path d="M12 11H23V22H12Z" fill="#8abdee" stroke="#2a64b4" stroke-width=".9"/><path d="M15 16.5H25M21 12.5L26 16.5L21 20.5" fill="none" stroke="#1a54b0" stroke-width="2"/><circle cx="30.500" cy="12" r="2.2" fill="#e03a2a"/></svg><span class="cj" style="left:231px;top:509.2px;color:#fff;">桌面</span><svg style="left:227px;top:529.5px;" width="32" height="32" viewBox="0 0 32 32"><path d="M2 11L10 7L30 9L28 30L6 31Z" fill="#e2a52a" stroke="#9c6f16" stroke-width=".8"/><path d="M6 6L13 2L14 24L7 26ZM15 4L22 2L23 22L16 24Z" fill="#8fc4ee" stroke="#4e86c4" stroke-width=".8"/><path d="M2 16L30 9L28 30L6 31Z" fill="#f0b23a" stroke="#a8761a" stroke-width=".8"/><path d="M14 24C14 20 20 20 20 24V29H14Z" fill="#3a5a9a"/></svg></div>
<div class="sunken" style="left:312px;top:222px;width:300px;height:264px;"></div>
<div class="" style="left:314px;top:241px;width:177px;height:227px;background:#f7f7f7;"></div>
<div class="" style="left:314px;top:224px;width:177px;height:17px;background:#d4d0c8;border:1px solid;border-color:#fff #404040 #404040 #fff;box-shadow:inset -1px -1px #808080;"></div>
<div class="" style="left:491px;top:224px;width:96px;height:17px;background:#d4d0c8;border:1px solid;border-color:#fff #404040 #404040 #fff;box-shadow:inset -1px -1px #808080;"></div>
<div class="" style="left:587px;top:224px;width:7px;height:17px;background:#d4d0c8;border:1px solid;border-color:#fff #404040 #404040 #fff;box-shadow:inset -1px -1px #808080;"></div>
<span class="cj" style="left:318px;top:227px;color:#000;">名称</span>
<svg style="left:350px;top:231px;" width="8" height="5" viewBox="0 0 8 5"><path d="M0 5H8L4 0Z" fill="#8a8880"/></svg>
<span class="cj" style="left:557px;top:227px;color:#000;">大小</span>
<div style="left:0;top:0;width:594px;height:468px;overflow:hidden;"><svg style="left:316px;top:241px;" width="16" height="16" viewBox="0 0 16 16"><rect x="1" y=".5" width="14.500" height="15" fill="#2f6fc9"/><path d="M1 7.500L15.500 12V15.500H1Z" fill="#f6c81e"/><path d="M1 7.500L15.500 12" stroke="#fbe48a" stroke-width=".8" opacity=".7"/><rect x="3" y="2" width="5" height="4" fill="#e4eefa"/><rect x="9" y="3" width="4.500" height="2.500" fill="#8db4ea"/></svg><span class="cj" style="left:334px;top:243.5px;color:#000;">例题</span><span class="lt " style="left:358px;top:244.22px;font-size:12.84px;line-height:12px;color:#000;transform:scaleX(0.7787);">6-1.dwg</span><span class="lt " style="left:552px;top:244.22px;font-size:12.84px;line-height:12px;color:#000;transform:scaleX(0.7787);">62 KB</span><span class="lt " style="left:591px;top:244.22px;font-size:12.84px;line-height:12px;color:#000;transform:scaleX(0.7787);">.</span><svg style="left:316px;top:258px;" width="16" height="16" viewBox="0 0 16 16"><rect x="1" y=".5" width="14.500" height="15" fill="#2f6fc9"/><path d="M1 7.500L15.500 12V15.500H1Z" fill="#f6c81e"/><path d="M1 7.500L15.500 12" stroke="#fbe48a" stroke-width=".8" opacity=".7"/><rect x="3" y="2" width="5" height="4" fill="#e4eefa"/><rect x="9" y="3" width="4.500" height="2.500" fill="#8db4ea"/></svg><span class="cj" style="left:334px;top:260.5px;color:#000;">例题</span><span class="lt " style="left:358px;top:261.22px;font-size:12.84px;line-height:12px;color:#000;transform:scaleX(0.7787);">6-2.dwg</span><span class="lt " style="left:552px;top:261.22px;font-size:12.84px;line-height:12px;color:#000;transform:scaleX(0.7787);">64 KB</span><span class="lt " style="left:591px;top:261.22px;font-size:12.84px;line-height:12px;color:#000;transform:scaleX(0.7787);">.</span><svg style="left:316px;top:275px;" width="16" height="16" viewBox="0 0 16 16"><rect x="1" y=".5" width="14.500" height="15" fill="#2f6fc9"/><path d="M1 7.500L15.500 12V15.500H1Z" fill="#f6c81e"/><path d="M1 7.500L15.500 12" stroke="#fbe48a" stroke-width=".8" opacity=".7"/><rect x="3" y="2" width="5" height="4" fill="#e4eefa"/><rect x="9" y="3" width="4.500" height="2.500" fill="#8db4ea"/></svg><span class="cj" style="left:334px;top:277.5px;color:#000;">例题</span><span class="lt " style="left:358px;top:278.22px;font-size:12.84px;line-height:12px;color:#000;transform:scaleX(0.7787);">6-3.dwg</span><span class="lt " style="left:552px;top:278.22px;font-size:12.84px;line-height:12px;color:#000;transform:scaleX(0.7787);">71 KB</span><span class="lt " style="left:591px;top:278.22px;font-size:12.84px;line-height:12px;color:#000;transform:scaleX(0.7787);">.</span><div class="" style="left:333px;top:292px;width:70px;height:17px;background:#d4d0c8;"></div><svg style="left:316px;top:292px;" width="16" height="16" viewBox="0 0 16 16"><rect x="1" y=".5" width="14.500" height="15" fill="#34558f"/><path d="M1 7.500L15.500 12V15.500H1Z" fill="#9e8f3e"/><path d="M1 7.500L15.500 12" stroke="#fbe48a" stroke-width=".8" opacity=".7"/><rect x="3" y="2" width="5" height="4" fill="#9fb0c8"/><rect x="9" y="3" width="4.500" height="2.500" fill="#6f88b0"/></svg><span class="cj" style="left:334px;top:294.5px;color:#000;">例题</span><span class="lt " style="left:358px;top:295.22px;font-size:12.84px;line-height:12px;color:#000;transform:scaleX(0.7787);">6-4.dwg</span><span class="lt " style="left:552px;top:295.22px;font-size:12.84px;line-height:12px;color:#000;transform:scaleX(0.7787);">71 KB</span><span class="lt " style="left:591px;top:295.22px;font-size:12.84px;line-height:12px;color:#000;transform:scaleX(0.7787);">.</span><svg style="left:316px;top:309px;" width="16" height="16" viewBox="0 0 16 16"><rect x="1" y=".5" width="14.500" height="15" fill="#2f6fc9"/><path d="M1 7.500L15.500 12V15.500H1Z" fill="#f6c81e"/><path d="M1 7.500L15.500 12" stroke="#fbe48a" stroke-width=".8" opacity=".7"/><rect x="3" y="2" width="5" height="4" fill="#e4eefa"/><rect x="9" y="3" width="4.500" height="2.500" fill="#8db4ea"/></svg><span class="cj" style="left:334px;top:311.5px;color:#000;">例题</span><span class="lt " style="left:358px;top:312.22px;font-size:12.84px;line-height:12px;color:#000;transform:scaleX(0.7787);">6-5.dwg</span><span class="lt " style="left:552px;top:312.22px;font-size:12.84px;line-height:12px;color:#000;transform:scaleX(0.7787);">8</span><span class="lt z " style="left:558px;top:311.44px;font-size:12.48px;line-height:12px;color:#000;transform:scaleX(0.8644);">0</span><span class="lt " style="left:564px;top:312.22px;font-size:12.84px;line-height:12px;color:#000;transform:scaleX(0.7787);"> KB</span><span class="lt " style="left:591px;top:312.22px;font-size:12.84px;line-height:12px;color:#000;transform:scaleX(0.7787);">.</span><svg style="left:316px;top:326px;" width="16" height="16" viewBox="0 0 16 16"><rect x="1" y=".5" width="14.500" height="15" fill="#2f6fc9"/><path d="M1 7.500L15.500 12V15.500H1Z" fill="#f6c81e"/><path d="M1 7.500L15.500 12" stroke="#fbe48a" stroke-width=".8" opacity=".7"/><rect x="3" y="2" width="5" height="4" fill="#e4eefa"/><rect x="9" y="3" width="4.500" height="2.500" fill="#8db4ea"/></svg><span class="cj" style="left:334px;top:328.5px;color:#000;">例题</span><span class="lt " style="left:358px;top:329.22px;font-size:12.84px;line-height:12px;color:#000;transform:scaleX(0.7787);">6-7.dwg</span><span class="lt " style="left:552px;top:329.22px;font-size:12.84px;line-height:12px;color:#000;transform:scaleX(0.7787);">68 KB</span><span class="lt " style="left:591px;top:329.22px;font-size:12.84px;line-height:12px;color:#000;transform:scaleX(0.7787);">.</span><svg style="left:316px;top:343px;" width="16" height="16" viewBox="0 0 16 16"><rect x="1" y=".5" width="14.500" height="15" fill="#2f6fc9"/><path d="M1 7.500L15.500 12V15.500H1Z" fill="#f6c81e"/><path d="M1 7.500L15.500 12" stroke="#fbe48a" stroke-width=".8" opacity=".7"/><rect x="3" y="2" width="5" height="4" fill="#e4eefa"/><rect x="9" y="3" width="4.500" height="2.500" fill="#8db4ea"/></svg><span class="cj" style="left:334px;top:345.5px;color:#000;">例题</span><span class="lt " style="left:358px;top:346.22px;font-size:12.84px;line-height:12px;color:#000;transform:scaleX(0.7787);">6-8.dwg</span><span class="lt " style="left:552px;top:346.22px;font-size:12.84px;line-height:12px;color:#000;transform:scaleX(0.7787);">73 KB</span><span class="lt " style="left:591px;top:346.22px;font-size:12.84px;line-height:12px;color:#000;transform:scaleX(0.7787);">.</span><svg style="left:316px;top:360px;" width="16" height="16" viewBox="0 0 16 16"><rect x="1" y=".5" width="14.500" height="15" fill="#2f6fc9"/><path d="M1 7.500L15.500 12V15.500H1Z" fill="#f6c81e"/><path d="M1 7.500L15.500 12" stroke="#fbe48a" stroke-width=".8" opacity=".7"/><rect x="3" y="2" width="5" height="4" fill="#e4eefa"/><rect x="9" y="3" width="4.500" height="2.500" fill="#8db4ea"/></svg><span class="cj" style="left:334px;top:362.5px;color:#000;">例题</span><span class="lt " style="left:358px;top:363.22px;font-size:12.84px;line-height:12px;color:#000;transform:scaleX(0.7787);">6-9.dwg</span><span class="lt " style="left:552px;top:363.22px;font-size:12.84px;line-height:12px;color:#000;transform:scaleX(0.7787);">63 KB</span><span class="lt " style="left:591px;top:363.22px;font-size:12.84px;line-height:12px;color:#000;transform:scaleX(0.7787);">.</span><svg style="left:316px;top:377px;" width="16" height="16" viewBox="0 0 16 16"><rect x="1" y=".5" width="14.500" height="15" fill="#2f6fc9"/><path d="M1 7.500L15.500 12V15.500H1Z" fill="#f6c81e"/><path d="M1 7.500L15.500 12" stroke="#fbe48a" stroke-width=".8" opacity=".7"/><rect x="3" y="2" width="5" height="4" fill="#e4eefa"/><rect x="9" y="3" width="4.500" height="2.500" fill="#8db4ea"/></svg><span class="cj" style="left:334px;top:379.5px;color:#000;">例题</span><span class="lt " style="left:358px;top:380.22px;font-size:12.84px;line-height:12px;color:#000;transform:scaleX(0.7787);">6-1</span><span class="lt z " style="left:376px;top:379.44px;font-size:12.48px;line-height:12px;color:#000;transform:scaleX(0.8644);">0</span><span class="lt " style="left:382px;top:380.22px;font-size:12.84px;line-height:12px;color:#000;transform:scaleX(0.7787);">.dwg</span><span class="lt " style="left:552px;top:380.22px;font-size:12.84px;line-height:12px;color:#000;transform:scaleX(0.7787);">65 KB</span><span class="lt " style="left:591px;top:380.22px;font-size:12.84px;line-height:12px;color:#000;transform:scaleX(0.7787);">.</span><svg style="left:316px;top:394px;" width="16" height="16" viewBox="0 0 16 16"><rect x="1" y=".5" width="14.500" height="15" fill="#2f6fc9"/><path d="M1 7.500L15.500 12V15.500H1Z" fill="#f6c81e"/><path d="M1 7.500L15.500 12" stroke="#fbe48a" stroke-width=".8" opacity=".7"/><rect x="3" y="2" width="5" height="4" fill="#e4eefa"/><rect x="9" y="3" width="4.500" height="2.500" fill="#8db4ea"/></svg><span class="cj" style="left:334px;top:396.5px;color:#000;">例题</span><span class="lt " style="left:358px;top:397.22px;font-size:12.84px;line-height:12px;color:#000;transform:scaleX(0.7787);">6-11.dwg</span><span class="lt " style="left:552px;top:397.22px;font-size:12.84px;line-height:12px;color:#000;transform:scaleX(0.7787);">68 KB</span><span class="lt " style="left:591px;top:397.22px;font-size:12.84px;line-height:12px;color:#000;transform:scaleX(0.7787);">.</span><svg style="left:316px;top:411px;" width="16" height="16" viewBox="0 0 16 16"><rect x="1" y=".5" width="14.500" height="15" fill="#2f6fc9"/><path d="M1 7.500L15.500 12V15.500H1Z" fill="#f6c81e"/><path d="M1 7.500L15.500 12" stroke="#fbe48a" stroke-width=".8" opacity=".7"/><rect x="3" y="2" width="5" height="4" fill="#e4eefa"/><rect x="9" y="3" width="4.500" height="2.500" fill="#8db4ea"/></svg><span class="cj" style="left:334px;top:413.5px;color:#000;">例题</span><span class="lt " style="left:358px;top:414.22px;font-size:12.84px;line-height:12px;color:#000;transform:scaleX(0.7787);">6-12.dwg</span><span class="lt " style="left:552px;top:414.22px;font-size:12.84px;line-height:12px;color:#000;transform:scaleX(0.7787);">65 KB</span><span class="lt " style="left:591px;top:414.22px;font-size:12.84px;line-height:12px;color:#000;transform:scaleX(0.7787);">.</span><svg style="left:316px;top:428px;" width="16" height="16" viewBox="0 0 16 16"><rect x="1" y=".5" width="14.500" height="15" fill="#2f6fc9"/><path d="M1 7.500L15.500 12V15.500H1Z" fill="#f6c81e"/><path d="M1 7.500L15.500 12" stroke="#fbe48a" stroke-width=".8" opacity=".7"/><rect x="3" y="2" width="5" height="4" fill="#e4eefa"/><rect x="9" y="3" width="4.500" height="2.500" fill="#8db4ea"/></svg><span class="cj" style="left:334px;top:430.5px;color:#000;">例题</span><span class="lt " style="left:358px;top:431.22px;font-size:12.84px;line-height:12px;color:#000;transform:scaleX(0.7787);">6-13.dwg</span><span class="lt " style="left:552px;top:431.22px;font-size:12.84px;line-height:12px;color:#000;transform:scaleX(0.7787);">65 KB</span><span class="lt " style="left:591px;top:431.22px;font-size:12.84px;line-height:12px;color:#000;transform:scaleX(0.7787);">.</span><svg style="left:316px;top:445px;" width="16" height="16" viewBox="0 0 16 16"><rect x="1" y=".5" width="14.500" height="15" fill="#2f6fc9"/><path d="M1 7.500L15.500 12V15.500H1Z" fill="#f6c81e"/><path d="M1 7.500L15.500 12" stroke="#fbe48a" stroke-width=".8" opacity=".7"/><rect x="3" y="2" width="5" height="4" fill="#e4eefa"/><rect x="9" y="3" width="4.500" height="2.500" fill="#8db4ea"/></svg><span class="cj" style="left:334px;top:447.5px;color:#000;">例题</span><span class="lt " style="left:358px;top:448.22px;font-size:12.84px;line-height:12px;color:#000;transform:scaleX(0.7787);">6-14.dwg</span><span class="lt " style="left:552px;top:448.22px;font-size:12.84px;line-height:12px;color:#000;transform:scaleX(0.7787);">64 KB</span><span class="lt " style="left:591px;top:448.22px;font-size:12.84px;line-height:12px;color:#000;transform:scaleX(0.7787);">.</span><svg style="left:316px;top:462px;" width="16" height="16" viewBox="0 0 16 16"><rect x="1" y=".5" width="14.500" height="15" fill="#2f6fc9"/><path d="M1 7.500L15.500 12V15.500H1Z" fill="#f6c81e"/><path d="M1 7.500L15.500 12" stroke="#fbe48a" stroke-width=".8" opacity=".7"/><rect x="3" y="2" width="5" height="4" fill="#e4eefa"/><rect x="9" y="3" width="4.500" height="2.500" fill="#8db4ea"/></svg><span class="cj" style="left:334px;top:464.5px;color:#000;">例题</span><span class="lt " style="left:358px;top:465.22px;font-size:12.84px;line-height:12px;color:#000;transform:scaleX(0.7787);">6-15.dwg</span><span class="lt " style="left:552px;top:465.22px;font-size:12.84px;line-height:12px;color:#000;transform:scaleX(0.7787);">64 KB</span><span class="lt " style="left:591px;top:465.22px;font-size:12.84px;line-height:12px;color:#000;transform:scaleX(0.7787);">.</span></div>
<div class="" style="left:594px;top:224px;width:16px;height:244px;background:#eceae4;"></div>
<div class="raised" style="left:594px;top:224px;width:16px;height:17px;"></div>
<svg style="left:598px;top:231px;" width="8" height="4" viewBox="0 0 8 4"><path d="M0 4H8L4 0Z" fill="#000"/></svg>
<div class="raised" style="left:594px;top:241px;width:16px;height:182px;"></div>
<div class="raised" style="left:594px;top:452px;width:16px;height:16px;"></div>
<svg style="left:598px;top:458px;" width="8" height="4" viewBox="0 0 8 4"><path d="M0 0H8L4 4Z" fill="#000"/></svg>
<div class="" style="left:314px;top:468px;width:280px;height:16px;background:#eceae4;"></div>
<div class="raised" style="left:314px;top:468px;width:16px;height:16px;"></div>
<svg style="left:320px;top:472px;" width="4" height="8" viewBox="0 0 4 8"><path d="M4 0V8L0 4Z" fill="#000"/></svg>
<div class="raised" style="left:330px;top:468px;width:136px;height:16px;"></div>
<div class="raised" style="left:578px;top:468px;width:16px;height:16px;"></div>
<svg style="left:584px;top:472px;" width="4" height="8" viewBox="0 0 4 8"><path d="M0 0V8L4 4Z" fill="#000"/></svg>
<div class="" style="left:594px;top:468px;width:16px;height:16px;background:#d4d0c8;"></div>
<div class="" style="left:618px;top:227px;width:200px;height:104px;border:1px solid #fff;"></div>
<div class="" style="left:617px;top:226px;width:200px;height:104px;border:1px solid #808080;"></div>
<div class="" style="left:625px;top:219px;width:30px;height:14px;background:#d4d0c8;"></div>
<span class="cj" style="left:628px;top:220px;color:#000;">预览</span>
<div class="" style="left:629px;top:242px;width:181px;height:80px;background:#fff;"></div>
<svg style="left:665px;top:268.4px;" width="31" height="30" viewBox="0 0 31 30"><rect x=".8" y=".8" width="6.700" height="16.400" fill="#2a2a2a" stroke="#000" stroke-width="1.600"/><path d="M2.800 2V16M5.300 2V16" stroke="#aaa" stroke-width=".7"/><path d="M0 8.500H8" stroke="#000" stroke-width=".8"/><path d="M7.500 4H25.5L27 6V11L25.5 13H7.500" fill="#fff" stroke="#000" stroke-width="2.100"/><path d="M11 6.300H25.5 M11 10.700H25.5" stroke="#222" stroke-width="1.800"/><path d="M11 4V13" stroke="#000" stroke-width="1.100"/><path d="M29.2 8.500L27 7V10Z" fill="#000"/><path d="M6.500 17V27M26.5 13V27M6.500 25.300H26.5" fill="none" stroke="#111" stroke-width=".9"/><path d="M11 13V21.500M11 19.800H26.5" fill="none" stroke="#111" stroke-width=".9"/><rect x="17.3" y="18.600" width="3.500" height="2" fill="#000"/><rect x="15.75" y="24.300" width="3" height="1.800" fill="#000"/></svg>
<svg style="left:715.3px;top:268.4px;" width="46.5" height="30" viewBox="0 0 46.5 30"><rect x=".8" y=".8" width="6.700" height="16.400" fill="#2a2a2a" stroke="#000" stroke-width="1.600"/><path d="M2.800 2V16M5.300 2V16" stroke="#aaa" stroke-width=".7"/><path d="M0 8.500H8" stroke="#000" stroke-width=".8"/><path d="M7.500 4H41L42.5 6V11L41 13H7.500" fill="#fff" stroke="#000" stroke-width="2.100"/><path d="M23.5 6.300H41 M23.5 10.700H41" stroke="#222" stroke-width="1.800"/><path d="M23.5 4V13" stroke="#000" stroke-width="1.100"/><path d="M44.7 8.500L42.5 7V10Z" fill="#000"/><path d="M6.500 17V27M42 13V27M6.500 25.300H42" fill="none" stroke="#111" stroke-width=".9"/><path d="M23.5 13V21.500M23.5 19.800H42" fill="none" stroke="#111" stroke-width=".9"/><rect x="31.3" y="18.600" width="3.500" height="2" fill="#000"/><rect x="23.5" y="24.300" width="3" height="1.800" fill="#000"/></svg>
<div class="sunken" style="left:394px;top:494px;width:13px;height:13px;"></div>
<span class="cj" style="left:411px;top:494px;color:#000;">选择初始视图</span><span class="lt " style="left:483px;top:494.72px;font-size:12.84px;line-height:12px;color:#000;transform:scaleX(0.7787);">(E)</span>
<div class="" style="left:489px;top:506px;width:6px;height:1px;background:#000;"></div>
<span class="cj" style="left:312px;top:519px;color:#000;">文件名</span><span class="lt " style="left:348px;top:519.72px;font-size:12.84px;line-height:12px;color:#000;transform:scaleX(0.7787);">(N):</span>
<div class="" style="left:354px;top:531px;width:6px;height:1px;background:#000;"></div>
<div class="sunken" style="left:393px;top:512px;width:331px;height:21px;"></div>
<div class="" style="left:395px;top:515px;width:68px;height:15px;background:#0a246a;"></div>
<span class="cj" style="left:396px;top:517px;color:#d4dcf0;">例题</span><span class="lt " style="left:420px;top:517.72px;font-size:12.84px;line-height:12px;color:#d4dcf0;transform:scaleX(0.7787);">6-4.dwg</span>
<div class="raised" style="left:706px;top:514px;width:16px;height:17px;"></div>
<svg style="left:710px;top:521px;" width="8" height="4" viewBox="0 0 8 4"><path d="M0 0H8L4 4Z" fill="#000"/></svg>
<span class="cj" style="left:312px;top:548px;color:#000;">文件类型</span><span class="lt " style="left:360px;top:548.72px;font-size:12.84px;line-height:12px;color:#000;transform:scaleX(0.7787);">(T):</span>
<div class="" style="left:366px;top:560px;width:6px;height:1px;background:#000;"></div>
<div class="sunken" style="left:393px;top:542px;width:331px;height:21px;"></div>
<span class="cj" style="left:398px;top:547px;color:#000;">图形</span><span class="lt " style="left:422px;top:547.72px;font-size:12.84px;line-height:12px;color:#000;transform:scaleX(0.7787);"> (*.dwg)</span>
<div class="raised" style="left:706px;top:544px;width:16px;height:17px;"></div>
<svg style="left:710px;top:551px;" width="8" height="4" viewBox="0 0 8 4"><path d="M0 0H8L4 4Z" fill="#000"/></svg>
<div class="raised" style="left:735px;top:512px;width:67px;height:22px;"></div>
<span class="cj" style="left:747px;top:517px;color:#000;">打开</span><span class="lt " style="left:771px;top:517.72px;font-size:12.84px;line-height:12px;color:#000;transform:scaleX(0.7787);">(O)</span>
<div class="" style="left:777px;top:529px;width:6px;height:1px;background:#000;"></div>
<div class="raised" style="left:803px;top:512px;width:17px;height:22px;"></div>
<svg style="left:808px;top:521px;" width="8" height="4" viewBox="0 0 8 4"><path d="M0 0H8L4 4Z" fill="#000"/></svg>
<div class="raised" style="left:735px;top:541px;width:85px;height:22px;"></div>
<span class="cj" style="left:765px;top:546px;color:#000;">取消</span>
<svg style="left:440px;top:213px;" width="14" height="22" viewBox="0 0 14 22"><path d="M1 1V17L4.8 13.4L7.8 20.5L10.6 19.3L7.6 12.4H12.5Z" fill="#fff" stroke="#000" stroke-width="1.2"/></svg>
<div class="" style="left:0px;top:611px;width:1024px;height:2px;background:#808080;"></div>
<div class="" style="left:0px;top:613px;width:1024px;height:18px;background:#d4d0c8;"></div>
<div class="" style="left:3px;top:614px;width:14px;height:16px;border:1px solid;border-color:#fff #808080 #808080 #fff;background:#d4d0c8;"></div>
<div class="" style="left:17px;top:614px;width:14px;height:16px;border:1px solid;border-color:#fff #808080 #808080 #fff;background:#d4d0c8;"></div>
<div class="" style="left:31px;top:614px;width:14px;height:16px;border:1px solid;border-color:#fff #808080 #808080 #fff;background:#d4d0c8;"></div>
<div class="" style="left:45px;top:614px;width:14px;height:16px;border:1px solid;border-color:#fff #808080 #808080 #fff;background:#d4d0c8;"></div>
<svg style="left:5px;top:616px;" width="10" height="11" viewBox="0 0 10 11"><path d="M1.500 0V11" stroke="#7c7c7c" stroke-width="1.800"/><path d="M10 0V11L3 5.500Z" fill="#7c7c7c"/></svg>
<svg style="left:20px;top:616px;" width="8" height="11" viewBox="0 0 8 11"><path d="M8 0V11L0 5.500Z" fill="#7c7c7c"/></svg>
<svg style="left:34px;top:616px;" width="8" height="11" viewBox="0 0 8 11"><path d="M0 0V11L8 5.500Z" fill="#7c7c7c"/></svg>
<svg style="left:47px;top:616px;" width="10" height="11" viewBox="0 0 10 11"><path d="M8.500 0V11" stroke="#7c7c7c" stroke-width="1.800"/><path d="M0 0V11L7 5.500Z" fill="#7c7c7c"/></svg>
<svg style="left:56px;top:612px;" width="145" height="19" viewBox="0 0 145 19"><path d="M0 0H52L44 17H8Z" fill="#fff"/><path d="M1 0L8 17H44L52 1" fill="none" stroke="#000" stroke-width="1.2"/><path d="M52 1L44 17H88L96 1" fill="none" stroke="#000" stroke-width="1"/><path d="M96 1L88 17H134L142 1" fill="none" stroke="#000" stroke-width="1"/></svg>
<span class="cj" style="left:69px;top:616px;color:#000;">模型</span>
<span class="cj" style="left:108px;top:616px;color:#000;">布局</span><span class="lt " style="left:132px;top:616.72px;font-size:12.84px;line-height:12px;color:#000;transform:scaleX(0.7787);">1</span>
<span class="cj" style="left:155px;top:616px;color:#000;">布局</span><span class="lt " style="left:179px;top:616.72px;font-size:12.84px;line-height:12px;color:#000;transform:scaleX(0.7787);">2</span>
<div class="" style="left:0px;top:630px;width:1024px;height:4px;background:linear-gradient(#808080,#404040);"></div>
<div class="" style="left:0px;top:633px;width:1024px;height:83px;background:#fff;"></div>
<div class="" style="left:0px;top:633px;width:15px;height:83px;background:linear-gradient(90deg,#9a9a9a,#858585);"></div>
<div class="" style="left:1px;top:636px;width:12px;height:4px;background:repeating-linear-gradient(90deg,#555 0 1px,#ddd 1px 2px,#9a9a9a 2px 3px);"></div>
<span class="cj" style="left:18px;top:634px;font-size:14.5px;color:#3a3a3a;">命令</span>
<span class="lt" style="left:47px;top:634px;font-size:14px;line-height:14px;color:#333;-webkit-text-stroke:0;">: _open</span>
<span class="cj" style="left:18px;top:650px;font-size:14.5px;color:#3a3a3a;">命令</span>
<span class="lt" style="left:47px;top:650px;font-size:14px;line-height:14px;color:#333;-webkit-text-stroke:0;">:</span>
<span class="cj" style="left:18px;top:665px;font-size:14.5px;color:#3a3a3a;">命令</span>
<span class="lt" style="left:47px;top:665px;font-size:14px;line-height:14px;color:#333;-webkit-text-stroke:0;">:</span>
<span class="cj" style="left:18px;top:681px;font-size:14.5px;color:#3a3a3a;">命令</span>
<span class="lt" style="left:47px;top:681px;font-size:14px;line-height:14px;color:#333;-webkit-text-stroke:0;">: _open</span>
<div class="" style="left:15px;top:697px;width:994px;height:1px;background:#b0b0b0;"></div>
<div class="" style="left:1008px;top:633px;width:16px;height:64px;background:#eceae4;"></div>
<div class="raised" style="left:1008px;top:633px;width:16px;height:16px;"></div>
<svg style="left:1012px;top:639px;" width="8" height="4" viewBox="0 0 8 4"><path d="M0 4H8L4 0Z" fill="#000"/></svg>
<div class="raised" style="left:1008px;top:681px;width:16px;height:16px;"></div>
<svg style="left:1012px;top:687px;" width="8" height="4" viewBox="0 0 8 4"><path d="M0 0H8L4 4Z" fill="#000"/></svg>
<div class="" style="left:944px;top:698px;width:64px;height:17px;background:#eceae4;"></div>
<div class="raised" style="left:946px;top:699px;width:16px;height:16px;"></div>
<svg style="left:952px;top:703px;" width="4" height="8" viewBox="0 0 4 8"><path d="M4 0V8L0 4Z" fill="#000"/></svg>
<div class="raised" style="left:962px;top:699px;width:14px;height:16px;"></div>
<div class="raised" style="left:991px;top:699px;width:16px;height:16px;"></div>
<svg style="left:997px;top:703px;" width="4" height="8" viewBox="0 0 4 8"><path d="M0 0V8L4 4Z" fill="#000"/></svg>
<div class="" style="left:1008px;top:697px;width:16px;height:18px;background:#d4d0c8;"></div>
<div class="" style="left:875px;top:666px;width:147px;height:22px;background:linear-gradient(#fdfeff,#e9f2fb);border:1px solid #a9c7e6;border-radius:2px;"></div>
<div class="" style="left:879px;top:669px;width:17px;height:16px;background:#f0501e;border-radius:3px;"></div>
<span class="sans" style="left:882px;top:668px;font-size:16px;line-height:18px;font-weight:bold;color:#fff;">S</span>
<span class="cj" style="left:901px;top:669px;font-size:15px;color:#2a7ad0;font-weight:bold;">英</span>
<svg style="left:921px;top:670px;" width="14" height="15" viewBox="0 0 14 15"><path d="M9 1C12 5 11 11 4 13C9 16 15 11 13 5C12 3 11 2 9 1Z" fill="#2a7ad0"/></svg>
<svg style="left:944px;top:673px;" width="10" height="10" viewBox="0 0 10 10"><circle cx="2" cy="2" r="1.6" fill="#2a7ad0"/><path d="M6 5C8 5 8 9 5 9" fill="none" stroke="#2a7ad0" stroke-width="1.6"/></svg>
<svg style="left:959px;top:671px;" width="18" height="13" viewBox="0 0 18 13"><rect x=".5" y=".5" width="17" height="12" rx="1" fill="#3a86d8"/><path d="M3 4H15M3 7H15" stroke="#fff" stroke-width="1.6" stroke-dasharray="1.6 1.2"/><path d="M5 10H13" stroke="#fff" stroke-width="1.4"/></svg>
<svg style="left:982px;top:670px;" width="12" height="15" viewBox="0 0 12 15"><circle cx="6" cy="4" r="3.4" fill="#a8a8a8"/><path d="M0 14C0 8 12 8 12 14Z" fill="#a8a8a8"/></svg>
<svg style="left:1001px;top:670px;" width="15" height="15" viewBox="0 0 15 15"><path d="M10 1C7 1 5 4 6.5 7L1 12.5L3 14.5L8.5 9C11.5 10.5 14.5 8 14 5L11.5 7.5L9 5.5L11.5 2.5Z" fill="#2a7ad0"/></svg>
<div class="" style="left:0px;top:715px;width:1024px;height:23px;background:linear-gradient(#4a4a4a 0,#565656 3px,#787878 4px,#808080 50%,#8a8a8a);"></div>
<span class="lt " style="left:12px;top:722.72px;font-size:12.84px;line-height:12px;color:#0a0a0a;transform:scaleX(0.7787);">2</span><span class="lt z " style="left:18px;top:721.94px;font-size:12.48px;line-height:12px;color:#0a0a0a;transform:scaleX(0.8644);">00</span><span class="lt " style="left:30px;top:722.72px;font-size:12.84px;line-height:12px;color:#0a0a0a;transform:scaleX(0.7787);">2.6153, 2716.9473, </span><span class="lt z " style="left:144px;top:721.94px;font-size:12.48px;line-height:12px;color:#0a0a0a;transform:scaleX(0.8644);">0</span><span class="lt " style="left:150px;top:722.72px;font-size:12.84px;line-height:12px;color:#0a0a0a;transform:scaleX(0.7787);">.</span><span class="lt z " style="left:156px;top:721.94px;font-size:12.48px;line-height:12px;color:#0a0a0a;transform:scaleX(0.8644);">0000</span>
<div class="" style="left:206px;top:718px;width:21.5px;height:20px;background:linear-gradient(#a9a9a9,#9a9a9a);border:1px solid #5a5a5a;border-top-color:#4a4a4a;"></div>
<div class="" style="left:228px;top:718px;width:21.5px;height:20px;background:linear-gradient(#d0d0d0,#bcbcbc);border:1px solid #6a6a6a;border-top-color:#4a4a4a;"></div>
<div class="" style="left:250px;top:718px;width:21.5px;height:20px;background:linear-gradient(#d0d0d0,#bcbcbc);border:1px solid #6a6a6a;border-top-color:#4a4a4a;"></div>
<div class="" style="left:272px;top:718px;width:21.5px;height:20px;background:linear-gradient(#a9a9a9,#9a9a9a);border:1px solid #5a5a5a;border-top-color:#4a4a4a;"></div>
<div class="" style="left:294px;top:718px;width:21.5px;height:20px;background:linear-gradient(#bfe4f7,#9bcfed);border:1px solid #4f7f9f;border-top-color:#4a4a4a;"></div>
<div class="" style="left:316px;top:718px;width:21.5px;height:20px;background:linear-gradient(#bfe4f7,#9bcfed);border:1px solid #4f7f9f;border-top-color:#4a4a4a;"></div>
<div class="" style="left:338px;top:718px;width:21.5px;height:20px;background:linear-gradient(#bfe4f7,#9bcfed);border:1px solid #4f7f9f;border-top-color:#4a4a4a;"></div>
<div class="" style="left:360px;top:718px;width:21.5px;height:20px;background:linear-gradient(#bfe4f7,#9bcfed);border:1px solid #4f7f9f;border-top-color:#4a4a4a;"></div>
<div class="" style="left:382px;top:718px;width:21.5px;height:20px;background:linear-gradient(#bfe4f7,#9bcfed);border:1px solid #4f7f9f;border-top-color:#4a4a4a;"></div>
<div class="" style="left:404px;top:718px;width:21.5px;height:20px;background:linear-gradient(#d0d0d0,#bcbcbc);border:1px solid #6a6a6a;border-top-color:#4a4a4a;"></div>
<div class="" style="left:426px;top:718px;width:21.5px;height:20px;background:linear-gradient(#d0d0d0,#bcbcbc);border:1px solid #6a6a6a;border-top-color:#4a4a4a;"></div>
<div class="" style="left:448px;top:718px;width:21.5px;height:20px;background:linear-gradient(#bfe4f7,#9bcfed);border:1px solid #4f7f9f;border-top-color:#4a4a4a;"></div>
<div class="" style="left:470px;top:718px;width:21.5px;height:20px;background:linear-gradient(#d0d0d0,#bcbcbc);border:1px solid #6a6a6a;border-top-color:#4a4a4a;"></div>
<div class="" style="left:492px;top:718px;width:21.5px;height:20px;background:linear-gradient(#d0d0d0,#bcbcbc);border:1px solid #6a6a6a;border-top-color:#4a4a4a;"></div>
<svg style="left:208px;top:721px;" width="18" height="14" viewBox="0 0 18 14"><path d="M3 7H15M9 2V12" stroke="#222" stroke-width="1.6"/><circle cx="12" cy="9" r="2.5" fill="#4a8ad8"/><circle cx="14" cy="11" r="1.6" fill="#e04a2a"/></svg>
<svg style="left:230px;top:721px;" width="18" height="14" viewBox="0 0 18 14"><path d="M3 3V11M6 3V11M9 3V11M12 3V11M15 3V11M2 12H16" stroke="#555" stroke-width="1"/></svg>
<svg style="left:252px;top:721px;" width="18" height="14" viewBox="0 0 18 14"><path d="M2 2H16V12H2ZM5.5 2V12M9 2V12M12.5 2V12M2 5.5H16M2 9H16" fill="none" stroke="#444" stroke-width="1"/></svg>
<svg style="left:274px;top:721px;" width="18" height="14" viewBox="0 0 18 14"><path d="M3 2V12H16" fill="none" stroke="#222" stroke-width="1.6"/></svg>
<svg style="left:296px;top:721px;" width="18" height="14" viewBox="0 0 18 14"><path d="M2 10C4 4 12 3 15 6M9 8L15 3" fill="none" stroke="#222" stroke-width="1.3"/><circle cx="9" cy="8" r="2.5" fill="none" stroke="#222"/></svg>
<svg style="left:318px;top:721px;" width="18" height="14" viewBox="0 0 18 14"><rect x="3" y="3" width="13" height="9" fill="#fff" stroke="#222" stroke-width="1.3"/><rect x="1" y="1" width="4" height="4" fill="#f08a2a"/></svg>
<svg style="left:340px;top:721px;" width="18" height="14" viewBox="0 0 18 14"><path d="M4 3H16V10H4Z" fill="#fff" stroke="#222" stroke-width="1.2"/><path d="M2 12L6 8" stroke="#222"/><circle cx="3" cy="12" r="2" fill="#f08a2a"/></svg>
<svg style="left:362px;top:721px;" width="18" height="14" viewBox="0 0 18 14"><path d="M2 12H16M2 12L15 3" fill="none" stroke="#222" stroke-width="1.5"/></svg>
<svg style="left:384px;top:721px;" width="18" height="14" viewBox="0 0 18 14"><path d="M2 2V12H16" fill="none" stroke="#222" stroke-width="1.3"/><path d="M4 11L12 4" stroke="#2a5ab0" stroke-width="1.3"/><rect x="11" y="1" width="5" height="5" fill="#f0a02a"/></svg>
<svg style="left:406px;top:721px;" width="18" height="14" viewBox="0 0 18 14"><path d="M2 7H10M6 3V11M11 9H16" stroke="#222" stroke-width="1.6"/></svg>
<svg style="left:428px;top:721px;" width="18" height="14" viewBox="0 0 18 14"><path d="M2 7H16M10 3V11" stroke="#222" stroke-width="1.8"/></svg>
<svg style="left:450px;top:721px;" width="18" height="14" viewBox="0 0 18 14"><rect x="2" y="2" width="14" height="10" fill="#eaf4ff" stroke="#2a6ad0" stroke-width="1.4"/><path d="M4 5H14M4 7H14M4 9H14" stroke="#4a8ae0" stroke-width="1" stroke-dasharray="1.5 1"/></svg>
<svg style="left:472px;top:721px;" width="18" height="14" viewBox="0 0 18 14"><rect x="4" y="3" width="10" height="8" fill="#f4f4f4" stroke="#222" stroke-width="1.3"/><path d="M9 3V11" stroke="#222"/></svg>
<svg style="left:494px;top:721px;" width="18" height="14" viewBox="0 0 18 14"><path d="M2 4H8M5 1V7" stroke="#222" stroke-width="1.3"/><rect x="7" y="6" width="9" height="6" fill="#5ab04a" stroke="#2a7a2a"/></svg>
<div class="" style="left:695px;top:718px;width:30px;height:20px;background:linear-gradient(#cfcfcf,#bbb);border:1px solid #686868;"></div>
<span class="cj" style="left:698px;top:722px;color:#111;">模型</span>
<div class="" style="left:726px;top:718px;width:21.5px;height:20px;background:linear-gradient(#d0d0d0,#bcbcbc);border:1px solid #6a6a6a;"></div>
<div class="" style="left:748px;top:718px;width:21.5px;height:20px;background:linear-gradient(#d0d0d0,#bcbcbc);border:1px solid #6a6a6a;"></div>
<svg style="left:729px;top:722px;" width="16" height="12" viewBox="0 0 16 12"><rect x="1" y="1" width="14" height="10" fill="#eee" stroke="#222" stroke-width="1.2"/><path d="M3 3L9 9H3Z" fill="#444"/></svg>
<svg style="left:751px;top:722px;" width="16" height="12" viewBox="0 0 16 12"><rect x="1" y="1" width="6" height="6" fill="#eee" stroke="#222"/><rect x="9" y="1" width="6" height="6" fill="#eee" stroke="#222"/><path d="M1 10H15" stroke="#222" stroke-width="1.6"/></svg>
<div class="" style="left:786px;top:718px;width:55px;height:20px;background:linear-gradient(#d0d0d0,#bcbcbc);border:1px solid #6a6a6a;"></div>
<svg style="left:790px;top:721px;" width="20" height="15" viewBox="0 0 20 15"><path d="M10 1L13 8L19 13L16 14L10 10L4 14L1 13L7 8Z" fill="#f4f4f4" stroke="#333" stroke-width="1.1"/></svg>
<span class="lt " style="left:811px;top:722.72px;font-size:12.84px;line-height:12px;color:#111;transform:scaleX(0.7787);">1:1</span>
<svg style="left:830px;top:726px;" width="8" height="5" viewBox="0 0 8 5"><path d="M0 0H8L4 5Z" fill="#111"/></svg>
<div class="" style="left:842px;top:718px;width:21.5px;height:20px;background:linear-gradient(#d0d0d0,#bcbcbc);border:1px solid #6a6a6a;"></div>
<div class="" style="left:864px;top:718px;width:21.5px;height:20px;background:linear-gradient(#d0d0d0,#bcbcbc);border:1px solid #6a6a6a;"></div>
<svg style="left:844px;top:721px;" width="18" height="15" viewBox="0 0 18 15"><path d="M8 1L10.5 7L16 12L13.5 13L8 9L2.5 13L0 12L5.5 7Z" fill="#f4f4f4" stroke="#444"/><circle cx="14" cy="10" r="3" fill="#f0b030"/></svg>
<svg style="left:866px;top:721px;" width="18" height="15" viewBox="0 0 18 15"><path d="M9 1L11.5 7L17 12L14.5 13L9 9L3.5 13L1 12L6.5 7Z" fill="#d8d8d8" stroke="#999"/></svg>
<div class="" style="left:887px;top:719px;width:3px;height:18px;background:#5a5a5a;"></div>
<div class="" style="left:891px;top:718px;width:21.5px;height:20px;background:linear-gradient(#d0d0d0,#bcbcbc);border:1px solid #6a6a6a;"></div>
<div class="" style="left:913px;top:718px;width:21.5px;height:20px;background:linear-gradient(#d0d0d0,#bcbcbc);border:1px solid #6a6a6a;"></div>
<div class="" style="left:935px;top:718px;width:21.5px;height:20px;background:linear-gradient(#d0d0d0,#bcbcbc);border:1px solid #6a6a6a;"></div>
<svg style="left:893px;top:720px;" width="18" height="16" viewBox="0 0 18 16"><circle cx="9" cy="8" r="5.5" fill="none" stroke="#222" stroke-width="3" stroke-dasharray="2.6 1.7"/><circle cx="9" cy="8" r="4.2" fill="#eee" stroke="#222" stroke-width="1.3"/><circle cx="9" cy="8" r="1.5" fill="#222"/></svg>
<svg style="left:915px;top:721px;" width="18" height="15" viewBox="0 0 18 15"><rect x="1" y="7" width="11" height="7" fill="#eee" stroke="#222" stroke-width="1.3"/><path d="M9 7V4C9 0 16 0 16 4V6" fill="none" stroke="#222" stroke-width="1.5"/></svg>
<svg style="left:937px;top:721px;" width="18" height="15" viewBox="0 0 18 15"><rect x="1" y="2" width="13" height="7" fill="#dde6f4" stroke="#445" stroke-width="1.2" stroke-dasharray="2 1"/><circle cx="14" cy="11" r="3" fill="#f0b030"/></svg>
<div class="" style="left:958px;top:718px;width:28px;height:20px;background:linear-gradient(#9a9a9a,#888);border:1px solid #555;"></div>
<svg style="left:966px;top:720px;" width="12" height="16" viewBox="0 0 12 16"><path d="M6 1C2.5 1 1 3.5 1 6C1 8.5 3.5 9.5 3.5 11.5H8.5C8.5 9.5 11 8.5 11 6C11 3.5 9.5 1 6 1Z" fill="#fff3b0" stroke="#c9a93a"/><rect x="4" y="12" width="4" height="3" fill="#ddd"/></svg>
<div class="" style="left:988px;top:718px;width:13px;height:20px;background:linear-gradient(#d0d0d0,#bcbcbc);border:1px solid #6a6a6a;"></div>
<svg style="left:991px;top:726px;" width="7" height="5" viewBox="0 0 7 5"><path d="M0 0H7L3.5 5Z" fill="#111"/></svg>
<div class="" style="left:1002px;top:718px;width:20px;height:20px;background:linear-gradient(#d0d0d0,#bcbcbc);border:1px solid #6a6a6a;"></div>
<svg style="left:1004px;top:722px;" width="16" height="12" viewBox="0 0 16 12"><rect x="1" y="1" width="14" height="10" fill="#f4f4f4" stroke="#222" stroke-width="1.3"/><path d="M1 3.5H15" stroke="#222" stroke-width="1.6"/></svg>
<div class="" style="left:0px;top:738px;width:1024px;height:30px;background:#d4d0c8;border-top:1px solid #fff;"></div>
<div class="raised" style="left:2px;top:742px;width:46px;height:22px;"></div>
<svg style="left:5px;top:746px;" width="15.5" height="15" viewBox="-1 0 19 16"><path d="M1 3C4 1 6 2 8 3L7 8C5 7 3 6 0 8Z" fill="#e8402a"/><path d="M9 3C11 4 14 4 17 2L16 7C13 9 10 8 8 8Z" fill="#4ab02a"/><path d="M0 9C3 7 5 8 7 9L6 14C4 13 2 12 -1 14Z" fill="#2a6ad8"/><path d="M8 9C10 10 13 10 16 8L15 13C12 15 9 14 7 14Z" fill="#f0b820"/></svg>
<span class="cj" style="left:22.5px;top:747px;color:#000;font-weight:bold;">开始</span>
<svg style="left:60px;top:747px;" width="14" height="16" viewBox="0 0 14 16"><rect x="2" y="1" width="10" height="9" rx="1" fill="#4a8ae0" stroke="#2a5ab0"/><rect x="3.5" y="2.5" width="7" height="5" fill="#bfe0ff"/><path d="M4 13H10M7 10V13" stroke="#5a6a8a" stroke-width="2"/></svg>
<svg style="left:80px;top:744px;" width="17" height="18" viewBox="0 0 17 18"><circle cx="8" cy="9" r="7.5" fill="#2a7ae0"/><rect x="4" y="5" width="8" height="8" fill="#eaf4ff"/><path d="M7 7H11V11H7Z" fill="#2a7ae0"/><circle cx="15" cy="5" r="1.8" fill="#e03a2a"/></svg>
<svg style="left:102px;top:744px;" width="18" height="18" viewBox="0 0 18 18"><rect x="1" y="3" width="16" height="13" rx="2" fill="#e8305a"/><path d="M2 7C7 9 11 9 16 7" stroke="#ffc0d0" stroke-width="1.5" fill="none"/><rect x="1" y="12" width="16" height="2" fill="#8ac04a"/></svg>
<span class="sans" style="left:130px;top:744px;font-size:15px;line-height:12px;font-weight:bold;color:#000;letter-spacing:-1px;">&raquo;</span>
<div class="" style="left:143px;top:742px;width:161px;height:22px;background:#fff;border:1px solid;border-color:#404040 #fff #fff #404040;box-shadow:inset 1px 1px #808080;background:#f3f2ef;"></div>
<svg style="left:149px;top:745px;" width="16" height="16" viewBox="0 0 16 16"><rect x="0" y="5" width="16" height="10" fill="#e8e8e8"/><path d="M0 15H16V8L9 14H0Z" fill="#222"/><path d="M8 1L13 10H10.5L8 5.5L5.5 10H3Z" fill="#e02020"/><path d="M4.5 8.5H11.5" stroke="#e02020" stroke-width="1.3"/></svg>
<span class="lt " style="left:169px;top:747.72px;font-size:12.84px;line-height:12px;color:#000;transform:scaleX(0.7787);-webkit-text-stroke:.55px #000;">AutoCAD 2</span><span class="lt z " style="left:223px;top:746.94px;font-size:12.48px;line-height:12px;color:#000;transform:scaleX(0.8644);-webkit-text-stroke:.55px #000;">0</span><span class="lt " style="left:229px;top:747.72px;font-size:12.84px;line-height:12px;color:#000;transform:scaleX(0.7787);-webkit-text-stroke:.55px #000;">11 - [Dra...</span>
<div class="raised" style="left:306px;top:742px;width:159px;height:22px;"></div>
<svg style="left:311px;top:746px;" width="17" height="14" viewBox="0 0 17 14"><path d="M1 3.5C1 2 2 1.5 3 1.5H7L9 3.5H15C16 3.5 16.5 4 16.5 5V12C16.5 13 16 13.5 15 13.5H2.5C1.5 13.5 1 13 1 12Z" fill="#f7d96a" stroke="#b8902a" stroke-width="1"/></svg>
<span class="lt " style="left:331px;top:747.72px;font-size:12.84px;line-height:12px;color:#000;transform:scaleX(0.7787);">D:\2</span><span class="lt z " style="left:355px;top:746.94px;font-size:12.48px;line-height:12px;color:#000;transform:scaleX(0.8644);">0</span><span class="lt " style="left:361px;top:747.72px;font-size:12.84px;line-height:12px;color:#000;transform:scaleX(0.7787);">11</span><span class="cj" style="left:373px;top:747px;color:#000;">书</span><span class="lt " style="left:385px;top:747.72px;font-size:12.84px;line-height:12px;color:#000;transform:scaleX(0.7787);">\AutoCAD_2...</span>
<div class="raised" style="left:470px;top:742px;width:159px;height:22px;"></div>
<svg style="left:475px;top:745px;" width="16" height="16" viewBox="0 0 16 16"><rect x="1" y="1" width="14" height="14" fill="#2a5ac0"/><rect x="3" y="3" width="8" height="7" fill="#fff"/><path d="M4 5H10M4 7H10" stroke="#2a5ac0"/><path d="M9 8L14 6V14H9Z" fill="#dfe8f8" stroke="#2a5ac0"/></svg>
<span class="lt " style="left:495px;top:747.72px;font-size:12.84px;line-height:12px;color:#000;transform:scaleX(0.7787);">AutoCAD_2</span><span class="lt z " style="left:549px;top:746.94px;font-size:12.48px;line-height:12px;color:#000;transform:scaleX(0.8644);">0</span><span class="lt " style="left:555px;top:747.72px;font-size:12.84px;line-height:12px;color:#000;transform:scaleX(0.7787);">11</span><span class="cj" style="left:567px;top:747px;color:#000;">实例教</span><span class="lt " style="left:603px;top:747.72px;font-size:12.84px;line-height:12px;color:#000;transform:scaleX(0.7787);">...</span>
<div class="" style="left:837px;top:747px;width:11.5px;height:13px;background:#0a246a;"></div>
<span class="sans" style="left:837.5px;top:747px;font-size:9px;line-height:12px;font-weight:bold;color:#fff;letter-spacing:-.5px;">CH</span>
<div class="" style="left:854px;top:742px;width:168px;height:22px;border:1px solid;border-color:#808080 #fff #fff #808080;"></div>
<svg style="left:859px;top:749px;" width="8" height="8" viewBox="0 0 8 8"><path d="M4 0V8L0 4ZM8 0V8L4 4Z" fill="#000"/></svg>
<div class="" style="left:871px;top:745px;width:15px;height:15px;background:#e8202a;border:1px solid #fff;outline:1px solid #e8202a;"></div>
<svg style="left:872px;top:746px;" width="13" height="13" viewBox="0 0 13 13"><circle cx="6.500" cy="6.500" r="5.300" fill="#fff"/><circle cx="6.500" cy="6.500" r="3.200" fill="#e8202a"/></svg>
<svg style="left:889px;top:745px;" width="17" height="17" viewBox="0 0 17 17"><rect x="1" y="2" width="10" height="8" fill="#3a5aa8" stroke="#223"/><rect x="4" y="5" width="9" height="7" fill="#6a8ad0" stroke="#223"/><path d="M13 3C15 5 15 8 13 10" fill="none" stroke="#333"/><path d="M8 10L14 16M14 10L8 16" stroke="#e02020" stroke-width="2"/></svg>
<svg style="left:907px;top:745px;" width="17" height="17" viewBox="0 0 17 17"><rect x="1" y="3" width="10" height="8" fill="#3a5aa8" stroke="#223"/><rect x="6" y="1" width="9" height="7" fill="#6a8ad0" stroke="#223"/><path d="M8 10L14 16M14 10L8 16" stroke="#e02020" stroke-width="2"/></svg>
<svg style="left:925px;top:745px;" width="15" height="16" viewBox="0 0 15 16"><path d="M7.5 1C10 3 12 3 14 3C14 10 11 13 7.5 15C4 13 1 10 1 3C3 3 5 3 7.5 1Z" fill="#c0202a" stroke="#701018"/><path d="M4 6C6 4 9 4 11 6C10 9 9 10 7.5 11C6 10 5 9 4 6Z" fill="#fff"/></svg>
<svg style="left:942px;top:745px;" width="18" height="16" viewBox="0 0 18 16"><ellipse cx="9" cy="8" rx="8.5" ry="7.5" fill="#e8d820"/><ellipse cx="9" cy="8" rx="6" ry="5.2" fill="#2aa02a"/><path d="M5 8H13M9 4.5V11.5" stroke="#ffef40" stroke-width="2.2"/></svg>
<svg style="left:962px;top:744px;" width="16" height="18" viewBox="0 0 16 18"><rect x="1" y="1" width="14" height="11" fill="#7a7a7a" stroke="#333"/><rect x="2.5" y="2.5" width="11" height="8" fill="#9a9a9a"/><path d="M2 15H14" stroke="#333" stroke-width="2.5" stroke-dasharray="3 2"/></svg>
<span class="lt " style="left:984px;top:747.72px;font-size:12.84px;line-height:12px;color:#000;transform:scaleX(0.7787);">19:31</span>
</div>
</body></html>
